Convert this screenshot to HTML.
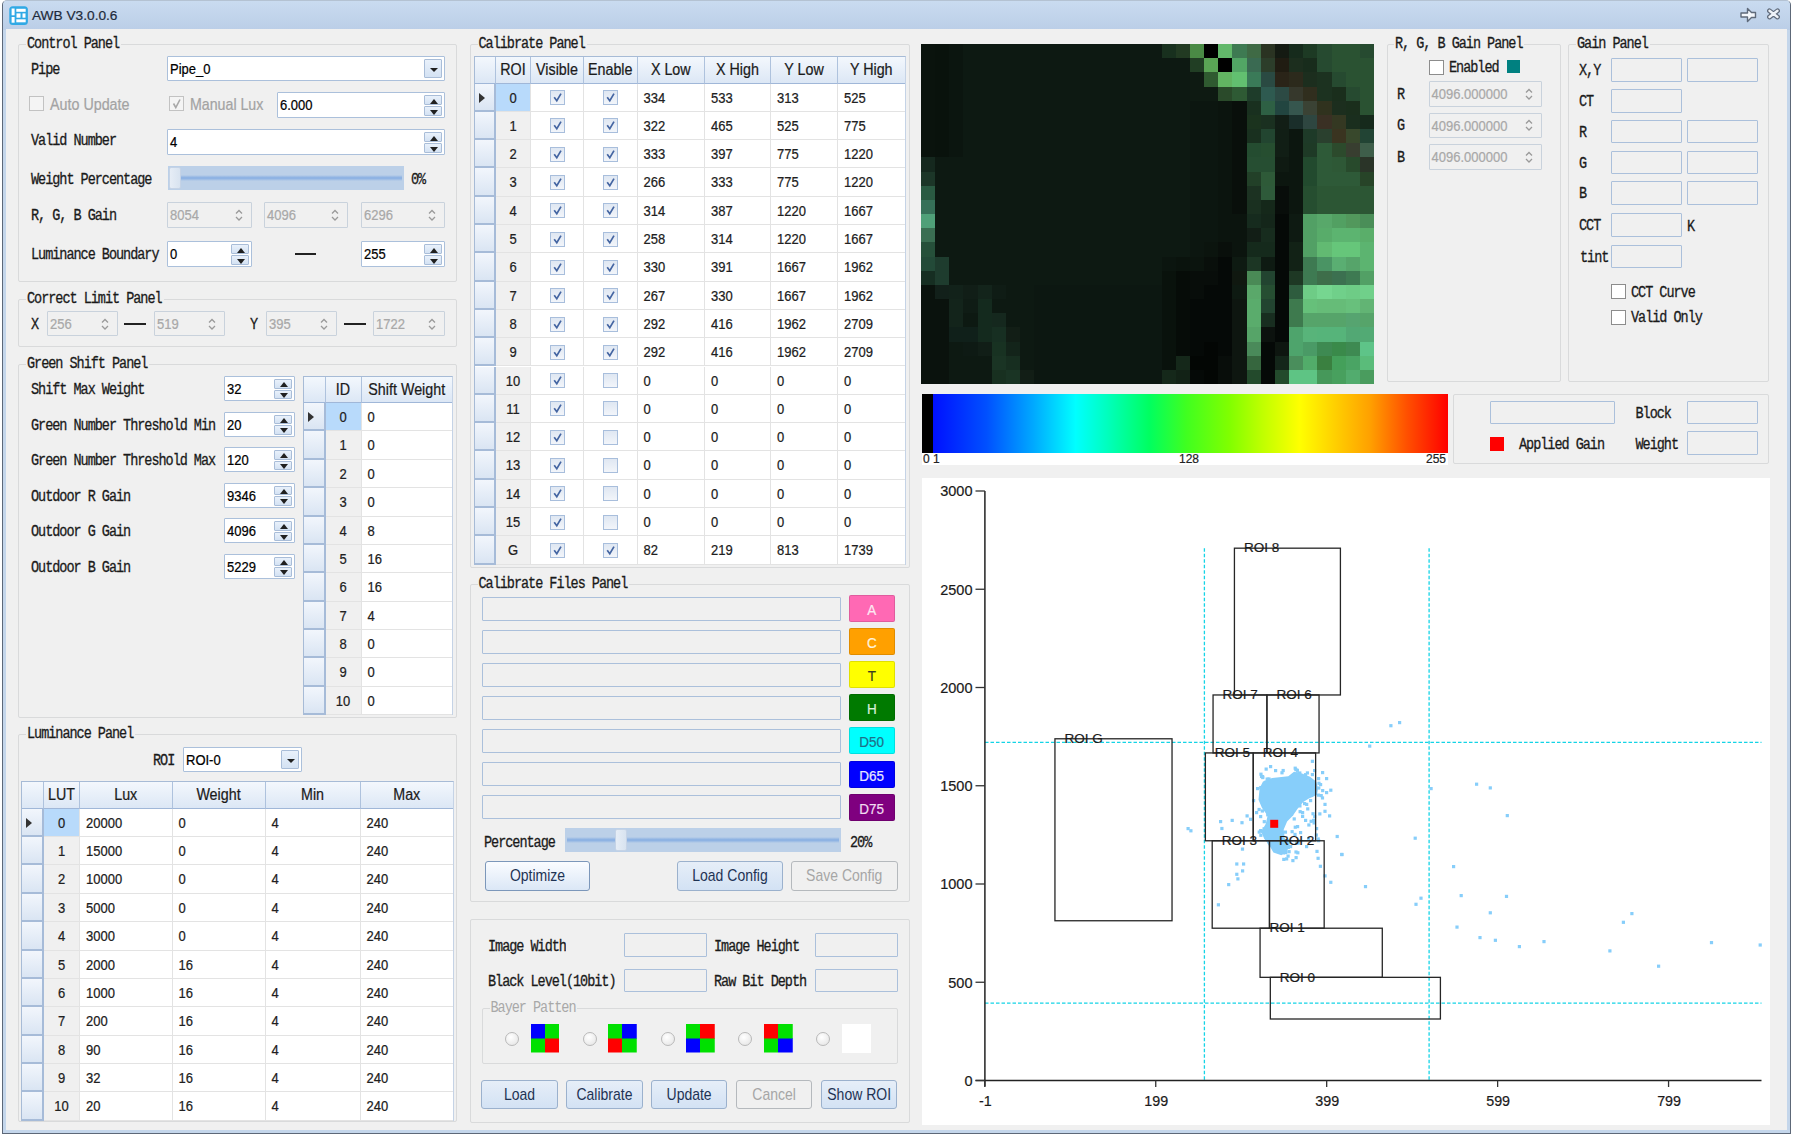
<!DOCTYPE html><html><head><meta charset="utf-8"><title>AWB V3.0.0.6</title><style>
*{box-sizing:border-box}
html,body{margin:0;padding:0;background:#fff;overflow:hidden}
#w{position:absolute;left:0;top:0;width:1794px;height:1134px;overflow:hidden;font-family:"Liberation Sans",sans-serif;font-size:13px;color:#000;-webkit-text-stroke:0.2px currentColor}
#w div{position:absolute}
#w svg{position:absolute}
.frame{left:2px;top:0px;width:1789px;height:1134px;border:1px solid #5d6878;border-top-color:#b4c2d2;border-radius:5px 5px 0 0;background:#c4d6eb}
.title{left:3px;top:1px;width:1787px;height:28.5px;border-radius:4px 4px 0 0;background:linear-gradient(#c9dbf0,#bbcee7)}
.client{left:5.6px;top:29.3px;width:1781.5px;height:1100.7px;background:#f0f0f0}
.lb{font-family:"Liberation Mono",monospace;font-size:13.5px;letter-spacing:-1.02px;font-weight:normal;-webkit-text-stroke:0.25px #1a1a1a;line-height:14px;white-space:pre;color:#1a1a1a;transform:scaleY(1.16);transform-origin:0 3px;margin-top:1px}
.lb.dis{color:#a8a8a8;-webkit-text-stroke:0}
.grp{border:1px solid #d9dadb;border-radius:2px}
.gt{background:#f0f0f0;padding:0 2px 0 1px}
.tb{background:#f0f0f0;border:1px solid #abc0db;border-radius:1px}
.spin{background:#fff;border:1px solid #abc0db;border-radius:1px;white-space:pre}
.spin span,.tb span{position:absolute;left:2px;top:0;transform:scaleY(1.15)}
.t{display:inline-block;transform:scaleY(1.15)}
.spin.dis{background:#f0f0f0;border-color:#c9d2dc;color:#a8a8a8}
.sb{right:2px;width:18px;background:linear-gradient(#e9f1fb,#d4e2f3);border:1px solid #a9bdd8;border-radius:1px}
.chk{background:#fff;border:1px solid #8c8c8c}
.chk.dis{background:#f4f4f4;border-color:#c2c2c2}
.sld{background:#bcd0e8}
.sldtr{left:2px;height:6px;background:linear-gradient(#bcd0e8,#8fb3e3 40%,#8fb3e3 60%,#bcd0e8)}
.sldth{top:1px;width:12px;height:calc(100% - 2px);background:linear-gradient(90deg,#e6edf6,#d8e3f0);border:1px solid #c5d3e6;border-radius:2px}
.btn{-webkit-text-stroke:0;border:1px solid #9bb1cd;border-radius:3px;background:linear-gradient(#e6eef8,#d3e2f4);text-align:center;color:#1e3354;white-space:pre;font-size:14px}
.btn.dis{background:#f0f0f0;border-color:#b5b9bd;color:#a6a6a6}
.dg{background:#fff}
.hd{font-size:14.3px;background:linear-gradient(#f4f8fd,#dce7f5);border-right:1px solid #aec2dd;border-bottom:1px solid #a0b7d8;text-align:center;line-height:27px;color:#1b1b1b;white-space:pre}
.rh{background:linear-gradient(#f2f6fc,#dae5f3);border-right:2px solid #a6bbd8;border-bottom:2px solid #a6bbd8}
.cell{border-right:1px solid #e3e3e3;border-bottom:1px solid #e3e3e3;padding-left:6px;white-space:pre;color:#202020}
.idc{background:#f0f0f0;text-align:center;padding-left:0}
.sel{background:#b8dafb}
.dsq{width:3px;height:3px;background:#87cefa}
.gck{width:15px;height:15px;border:1px solid #a8bedc;background:linear-gradient(#dfe7f2,#f2f5fa)}
.cbtn{border:1px solid rgba(0,0,0,0.12);border-radius:2px;text-align:center;font-size:13.5px}
.btn.def{border-color:#7c97ba;background:linear-gradient(#fafcff,#dbe7f6)}
.radio{width:14px;height:14px;border-radius:50%;border:1px solid #b9b9b9;background:radial-gradient(circle at 40% 35%,#ffffff,#e2e2e2)}
.lbs{font-family:"Liberation Sans",sans-serif;white-space:pre}
</style></head><body><div id="w">
<div class="frame"></div><div class="title"></div><div class="client"></div>
<svg style="left:9px;top:6px" width="20" height="20"><rect x="0.3" y="0.3" width="18.6" height="18.6" rx="3.5" fill="#30a9e5"/><rect x="2.6" y="2.5" width="3" height="6.8" fill="#fff"/><rect x="2.6" y="11" width="3" height="5.7" fill="#fff"/><rect x="7.3" y="2.8" width="9.4" height="3" fill="#fff"/><rect x="7.5" y="7.4" width="4" height="4.3" fill="#fff"/><rect x="13.5" y="7.4" width="3" height="4.3" fill="#fff"/><rect x="7.3" y="13.3" width="9.4" height="3" fill="#fff"/></svg>
<div class="lbs" style="left:32px;top:7px;font-size:13.7px;color:#1e2a3a;line-height:17px">AWB V3.0.0.6</div>
<svg style="left:1739px;top:6px" width="20" height="18"><path d="M2 7 H8.5 V2.5 L12.5 6.5 H16.5 V11.5 H12.5 L8.5 15.5 V11 H2 Z" fill="#f4f7fb" stroke="#5f6a7a" stroke-width="1.4" stroke-linejoin="round"/></svg>
<svg style="left:1765px;top:6px" width="18" height="16"><path d="M4.5 4.8 L12.5 11 M12.5 4.8 L4.5 11" stroke="#5f6a7a" stroke-width="4.8" stroke-linecap="round"/><path d="M4.5 4.8 L12.5 11 M12.5 4.8 L4.5 11" stroke="#eef2f8" stroke-width="2.4" stroke-linecap="round"/></svg>
<div class="grp" style="left:18px;top:44px;width:439px;height:238px"></div>
<div class="lb gt" style="left:26px;top:36px">Control Panel</div>
<div class="lb" style="left:31px;top:62px;">Pipe</div>
<div class="spin" style="left:167px;top:56px;width:278px;height:25px;line-height:23px"><span>Pipe_0</span><div class="sb" style="top:2px;height:19px"><svg width="8" height="5" style="position:absolute;left:5px;top:7.5px"><path d="M0 0 L4 4 L8 0Z" fill="#202020"/></svg></div></div>
<div class="chk dis" style="left:29px;top:96px;width:15px;height:15px"></div>
<div class="lbs" style="left:50px;top:96px;color:#a3a3a3;line-height:16px;font-size:14.3px"><span class="t">Auto Update</span></div>
<div class="chk dis" style="left:169px;top:96px;width:15px;height:15px"><svg width="15" height="15" style="position:absolute;left:-1px;top:-1px"><path d="M4.5 7.5 L6.8 11.5 L11 3.5" fill="none" stroke="#a8a8a8" stroke-width="1.6"/></svg></div>
<div class="lbs" style="left:190px;top:96px;color:#a3a3a3;line-height:16px;font-size:14.2px"><span class="t">Manual Lux</span></div>
<div class="spin" style="left:277px;top:92px;width:168px;height:26px;line-height:24px"><span>6.000</span><div class="sb" style="top:2px;height:10.0px"><svg width="8" height="5" style="position:absolute;left:5px;top:2.5px"><path d="M0 5 L4 0 L8 5Z" fill="#202020"/></svg></div><div class="sb" style="top:13.0px;height:10.0px"><svg width="8" height="5" style="position:absolute;left:5px;top:2.5px"><path d="M0 0 L4 5 L8 0Z" fill="#202020"/></svg></div></div>
<div class="lb" style="left:31px;top:133px;">Valid Number</div>
<div class="spin" style="left:167px;top:129px;width:278px;height:26px;line-height:24px"><span>4</span><div class="sb" style="top:2px;height:10.0px"><svg width="8" height="5" style="position:absolute;left:5px;top:2.5px"><path d="M0 5 L4 0 L8 5Z" fill="#202020"/></svg></div><div class="sb" style="top:13.0px;height:10.0px"><svg width="8" height="5" style="position:absolute;left:5px;top:2.5px"><path d="M0 0 L4 5 L8 0Z" fill="#202020"/></svg></div></div>
<div class="lb" style="left:31px;top:172px;">Weight Percentage</div>
<div class="sld" style="left:168px;top:166px;width:236px;height:24px"><div class="sldtr" style="top:9.0px;width:232px"></div><div class="sldth" style="left:1px"></div></div>
<div class="lb" style="left:411px;top:172px;">0%</div>
<div class="lb" style="left:31px;top:208px;">R, G, B Gain</div>
<div class="spin dis" style="left:167px;top:202px;width:85px;height:26px;line-height:24px"><span>8054</span><svg class="chev" width="10" height="16" style="right:7px;top:4.0px"><path d="M2 6.5 L5 3.5 L8 6.5" fill="none" stroke="#9a9a9a" stroke-width="1.3"/><path d="M2 10 L5 13 L8 10" fill="none" stroke="#9a9a9a" stroke-width="1.3"/></svg></div>
<div class="spin dis" style="left:264px;top:202px;width:84px;height:26px;line-height:24px"><span>4096</span><svg class="chev" width="10" height="16" style="right:7px;top:4.0px"><path d="M2 6.5 L5 3.5 L8 6.5" fill="none" stroke="#9a9a9a" stroke-width="1.3"/><path d="M2 10 L5 13 L8 10" fill="none" stroke="#9a9a9a" stroke-width="1.3"/></svg></div>
<div class="spin dis" style="left:361px;top:202px;width:84px;height:26px;line-height:24px"><span>6296</span><svg class="chev" width="10" height="16" style="right:7px;top:4.0px"><path d="M2 6.5 L5 3.5 L8 6.5" fill="none" stroke="#9a9a9a" stroke-width="1.3"/><path d="M2 10 L5 13 L8 10" fill="none" stroke="#9a9a9a" stroke-width="1.3"/></svg></div>
<div class="lb" style="left:31px;top:247px;">Luminance Boundary</div>
<div class="spin" style="left:167px;top:241px;width:85px;height:26px;line-height:24px"><span>0</span><div class="sb" style="top:2px;height:10.0px"><svg width="8" height="5" style="position:absolute;left:5px;top:2.5px"><path d="M0 5 L4 0 L8 5Z" fill="#202020"/></svg></div><div class="sb" style="top:13.0px;height:10.0px"><svg width="8" height="5" style="position:absolute;left:5px;top:2.5px"><path d="M0 0 L4 5 L8 0Z" fill="#202020"/></svg></div></div>
<div style="left:295px;top:253px;width:21px;height:2px;background:#222"></div>
<div class="spin" style="left:361px;top:241px;width:84px;height:26px;line-height:24px"><span>255</span><div class="sb" style="top:2px;height:10.0px"><svg width="8" height="5" style="position:absolute;left:5px;top:2.5px"><path d="M0 5 L4 0 L8 5Z" fill="#202020"/></svg></div><div class="sb" style="top:13.0px;height:10.0px"><svg width="8" height="5" style="position:absolute;left:5px;top:2.5px"><path d="M0 0 L4 5 L8 0Z" fill="#202020"/></svg></div></div>
<div class="grp" style="left:18px;top:299px;width:439px;height:48px"></div>
<div class="lb gt" style="left:26px;top:291px">Correct Limit Panel</div>
<div class="lb" style="left:31px;top:317px;">X</div>
<div class="spin dis" style="left:47px;top:311px;width:71px;height:25px;line-height:23px"><span>256</span><svg class="chev" width="10" height="16" style="right:7px;top:3.5px"><path d="M2 6.5 L5 3.5 L8 6.5" fill="none" stroke="#9a9a9a" stroke-width="1.3"/><path d="M2 10 L5 13 L8 10" fill="none" stroke="#9a9a9a" stroke-width="1.3"/></svg></div>
<div style="left:124px;top:323px;width:22px;height:2px;background:#222"></div>
<div class="spin dis" style="left:154px;top:311px;width:71px;height:25px;line-height:23px"><span>519</span><svg class="chev" width="10" height="16" style="right:7px;top:3.5px"><path d="M2 6.5 L5 3.5 L8 6.5" fill="none" stroke="#9a9a9a" stroke-width="1.3"/><path d="M2 10 L5 13 L8 10" fill="none" stroke="#9a9a9a" stroke-width="1.3"/></svg></div>
<div class="lb" style="left:250px;top:317px;">Y</div>
<div class="spin dis" style="left:266px;top:311px;width:71px;height:25px;line-height:23px"><span>395</span><svg class="chev" width="10" height="16" style="right:7px;top:3.5px"><path d="M2 6.5 L5 3.5 L8 6.5" fill="none" stroke="#9a9a9a" stroke-width="1.3"/><path d="M2 10 L5 13 L8 10" fill="none" stroke="#9a9a9a" stroke-width="1.3"/></svg></div>
<div style="left:344px;top:323px;width:22px;height:2px;background:#222"></div>
<div class="spin dis" style="left:373px;top:311px;width:72px;height:25px;line-height:23px"><span>1722</span><svg class="chev" width="10" height="16" style="right:7px;top:3.5px"><path d="M2 6.5 L5 3.5 L8 6.5" fill="none" stroke="#9a9a9a" stroke-width="1.3"/><path d="M2 10 L5 13 L8 10" fill="none" stroke="#9a9a9a" stroke-width="1.3"/></svg></div>
<div class="grp" style="left:18px;top:364px;width:439px;height:354px"></div>
<div class="lb gt" style="left:26px;top:356px">Green Shift Panel</div>
<div class="lb" style="left:31px;top:382.0px;">Shift Max Weight</div>
<div class="spin" style="left:224px;top:376.0px;width:71px;height:25px;line-height:23px"><span>32</span><div class="sb" style="top:2px;height:9.5px"><svg width="8" height="5" style="position:absolute;left:5px;top:2.25px"><path d="M0 5 L4 0 L8 5Z" fill="#202020"/></svg></div><div class="sb" style="top:12.5px;height:9.5px"><svg width="8" height="5" style="position:absolute;left:5px;top:2.25px"><path d="M0 0 L4 5 L8 0Z" fill="#202020"/></svg></div></div>
<div class="lb" style="left:31px;top:417.5px;">Green Number Threshold Min</div>
<div class="spin" style="left:224px;top:411.5px;width:71px;height:25px;line-height:23px"><span>20</span><div class="sb" style="top:2px;height:9.5px"><svg width="8" height="5" style="position:absolute;left:5px;top:2.25px"><path d="M0 5 L4 0 L8 5Z" fill="#202020"/></svg></div><div class="sb" style="top:12.5px;height:9.5px"><svg width="8" height="5" style="position:absolute;left:5px;top:2.25px"><path d="M0 0 L4 5 L8 0Z" fill="#202020"/></svg></div></div>
<div class="lb" style="left:31px;top:453.0px;">Green Number Threshold Max</div>
<div class="spin" style="left:224px;top:447.0px;width:71px;height:25px;line-height:23px"><span>120</span><div class="sb" style="top:2px;height:9.5px"><svg width="8" height="5" style="position:absolute;left:5px;top:2.25px"><path d="M0 5 L4 0 L8 5Z" fill="#202020"/></svg></div><div class="sb" style="top:12.5px;height:9.5px"><svg width="8" height="5" style="position:absolute;left:5px;top:2.25px"><path d="M0 0 L4 5 L8 0Z" fill="#202020"/></svg></div></div>
<div class="lb" style="left:31px;top:488.5px;">Outdoor R Gain</div>
<div class="spin" style="left:224px;top:482.5px;width:71px;height:25px;line-height:23px"><span>9346</span><div class="sb" style="top:2px;height:9.5px"><svg width="8" height="5" style="position:absolute;left:5px;top:2.25px"><path d="M0 5 L4 0 L8 5Z" fill="#202020"/></svg></div><div class="sb" style="top:12.5px;height:9.5px"><svg width="8" height="5" style="position:absolute;left:5px;top:2.25px"><path d="M0 0 L4 5 L8 0Z" fill="#202020"/></svg></div></div>
<div class="lb" style="left:31px;top:524.0px;">Outdoor G Gain</div>
<div class="spin" style="left:224px;top:518.0px;width:71px;height:25px;line-height:23px"><span>4096</span><div class="sb" style="top:2px;height:9.5px"><svg width="8" height="5" style="position:absolute;left:5px;top:2.25px"><path d="M0 5 L4 0 L8 5Z" fill="#202020"/></svg></div><div class="sb" style="top:12.5px;height:9.5px"><svg width="8" height="5" style="position:absolute;left:5px;top:2.25px"><path d="M0 0 L4 5 L8 0Z" fill="#202020"/></svg></div></div>
<div class="lb" style="left:31px;top:559.5px;">Outdoor B Gain</div>
<div class="spin" style="left:224px;top:553.5px;width:71px;height:25px;line-height:23px"><span>5229</span><div class="sb" style="top:2px;height:9.5px"><svg width="8" height="5" style="position:absolute;left:5px;top:2.25px"><path d="M0 5 L4 0 L8 5Z" fill="#202020"/></svg></div><div class="sb" style="top:12.5px;height:9.5px"><svg width="8" height="5" style="position:absolute;left:5px;top:2.25px"><path d="M0 0 L4 5 L8 0Z" fill="#202020"/></svg></div></div>
<div class="dg" style="left:303px;top:375.6px;width:150px;height:339.58px"></div>
<div class="hd" style="left:303px;top:375.6px;width:22.5px;height:27.4px"><span class="t"></span></div>
<div class="hd" style="left:325.5px;top:375.6px;width:36.0px;height:27.4px"><span class="t">ID</span></div>
<div class="hd" style="left:361.5px;top:375.6px;width:91.5px;height:27.4px"><span class="t">Shift Weight</span></div>
<div class="rh" style="left:303px;top:403.0px;width:22.5px;height:28.38px"><svg width="6" height="10" style="left:5px;top:9.19px"><path d="M0 0 L6 5 L0 10Z" fill="#333"/></svg></div>
<div class="cell idc sel" style="left:325.5px;top:403.0px;width:36.0px;height:28.38px;line-height:28.38px"><span class="t">0</span></div>
<div class="cell" style="left:361.5px;top:403.0px;width:91.5px;height:28.38px;line-height:28.38px"><span class="t">0</span></div>
<div class="rh" style="left:303px;top:431.38px;width:22.5px;height:28.38px"></div>
<div class="cell idc" style="left:325.5px;top:431.38px;width:36.0px;height:28.38px;line-height:28.38px"><span class="t">1</span></div>
<div class="cell" style="left:361.5px;top:431.38px;width:91.5px;height:28.38px;line-height:28.38px"><span class="t">0</span></div>
<div class="rh" style="left:303px;top:459.76px;width:22.5px;height:28.38px"></div>
<div class="cell idc" style="left:325.5px;top:459.76px;width:36.0px;height:28.38px;line-height:28.38px"><span class="t">2</span></div>
<div class="cell" style="left:361.5px;top:459.76px;width:91.5px;height:28.38px;line-height:28.38px"><span class="t">0</span></div>
<div class="rh" style="left:303px;top:488.14px;width:22.5px;height:28.38px"></div>
<div class="cell idc" style="left:325.5px;top:488.14px;width:36.0px;height:28.38px;line-height:28.38px"><span class="t">3</span></div>
<div class="cell" style="left:361.5px;top:488.14px;width:91.5px;height:28.38px;line-height:28.38px"><span class="t">0</span></div>
<div class="rh" style="left:303px;top:516.52px;width:22.5px;height:28.38px"></div>
<div class="cell idc" style="left:325.5px;top:516.52px;width:36.0px;height:28.38px;line-height:28.38px"><span class="t">4</span></div>
<div class="cell" style="left:361.5px;top:516.52px;width:91.5px;height:28.38px;line-height:28.38px"><span class="t">8</span></div>
<div class="rh" style="left:303px;top:544.9px;width:22.5px;height:28.38px"></div>
<div class="cell idc" style="left:325.5px;top:544.9px;width:36.0px;height:28.38px;line-height:28.38px"><span class="t">5</span></div>
<div class="cell" style="left:361.5px;top:544.9px;width:91.5px;height:28.38px;line-height:28.38px"><span class="t">16</span></div>
<div class="rh" style="left:303px;top:573.28px;width:22.5px;height:28.38px"></div>
<div class="cell idc" style="left:325.5px;top:573.28px;width:36.0px;height:28.38px;line-height:28.38px"><span class="t">6</span></div>
<div class="cell" style="left:361.5px;top:573.28px;width:91.5px;height:28.38px;line-height:28.38px"><span class="t">16</span></div>
<div class="rh" style="left:303px;top:601.66px;width:22.5px;height:28.38px"></div>
<div class="cell idc" style="left:325.5px;top:601.66px;width:36.0px;height:28.38px;line-height:28.38px"><span class="t">7</span></div>
<div class="cell" style="left:361.5px;top:601.66px;width:91.5px;height:28.38px;line-height:28.38px"><span class="t">4</span></div>
<div class="rh" style="left:303px;top:630.04px;width:22.5px;height:28.38px"></div>
<div class="cell idc" style="left:325.5px;top:630.04px;width:36.0px;height:28.38px;line-height:28.38px"><span class="t">8</span></div>
<div class="cell" style="left:361.5px;top:630.04px;width:91.5px;height:28.38px;line-height:28.38px"><span class="t">0</span></div>
<div class="rh" style="left:303px;top:658.42px;width:22.5px;height:28.38px"></div>
<div class="cell idc" style="left:325.5px;top:658.42px;width:36.0px;height:28.38px;line-height:28.38px"><span class="t">9</span></div>
<div class="cell" style="left:361.5px;top:658.42px;width:91.5px;height:28.38px;line-height:28.38px"><span class="t">0</span></div>
<div class="rh" style="left:303px;top:686.8px;width:22.5px;height:28.38px"></div>
<div class="cell idc" style="left:325.5px;top:686.8px;width:36.0px;height:28.38px;line-height:28.38px"><span class="t">10</span></div>
<div class="cell" style="left:361.5px;top:686.8px;width:91.5px;height:28.38px;line-height:28.38px"><span class="t">0</span></div>
<div style="left:303px;top:375.6px;width:150px;height:339.58px;border:1px solid #a7bbd6;border-bottom:none;border-right-color:#c5d3e6"></div>
<div class="grp" style="left:18px;top:734px;width:439px;height:388px"></div>
<div class="lb gt" style="left:26px;top:726px">Luminance Panel</div>
<div class="lb" style="left:153px;top:753px;">ROI</div>
<div class="spin" style="left:183px;top:747px;width:119px;height:25px;line-height:23px"><span>ROI-0</span><div class="sb" style="top:2px;height:19px"><svg width="8" height="5" style="position:absolute;left:5px;top:7.5px"><path d="M0 0 L4 4 L8 0Z" fill="#202020"/></svg></div></div>
<div class="dg" style="left:21px;top:781px;width:433px;height:339.77px"></div>
<div class="hd" style="left:21px;top:781px;width:23px;height:27.7px"><span class="t"></span></div>
<div class="hd" style="left:44px;top:781px;width:36px;height:27.7px"><span class="t">LUT</span></div>
<div class="hd" style="left:80px;top:781px;width:92.5px;height:27.7px"><span class="t">Lux</span></div>
<div class="hd" style="left:172.5px;top:781px;width:93.0px;height:27.7px"><span class="t">Weight</span></div>
<div class="hd" style="left:265.5px;top:781px;width:95.0px;height:27.7px"><span class="t">Min</span></div>
<div class="hd" style="left:360.5px;top:781px;width:93.5px;height:27.7px"><span class="t">Max</span></div>
<div class="rh" style="left:21px;top:808.7px;width:23px;height:28.37px"><svg width="6" height="10" style="left:5px;top:9.185px"><path d="M0 0 L6 5 L0 10Z" fill="#333"/></svg></div>
<div class="cell idc sel" style="left:44px;top:808.7px;width:36px;height:28.37px;line-height:28.37px"><span class="t">0</span></div>
<div class="cell" style="left:80px;top:808.7px;width:92.5px;height:28.37px;line-height:28.37px"><span class="t">20000</span></div>
<div class="cell" style="left:172.5px;top:808.7px;width:93.0px;height:28.37px;line-height:28.37px"><span class="t">0</span></div>
<div class="cell" style="left:265.5px;top:808.7px;width:95.0px;height:28.37px;line-height:28.37px"><span class="t">4</span></div>
<div class="cell" style="left:360.5px;top:808.7px;width:93.5px;height:28.37px;line-height:28.37px"><span class="t">240</span></div>
<div class="rh" style="left:21px;top:837.07px;width:23px;height:28.37px"></div>
<div class="cell idc" style="left:44px;top:837.07px;width:36px;height:28.37px;line-height:28.37px"><span class="t">1</span></div>
<div class="cell" style="left:80px;top:837.07px;width:92.5px;height:28.37px;line-height:28.37px"><span class="t">15000</span></div>
<div class="cell" style="left:172.5px;top:837.07px;width:93.0px;height:28.37px;line-height:28.37px"><span class="t">0</span></div>
<div class="cell" style="left:265.5px;top:837.07px;width:95.0px;height:28.37px;line-height:28.37px"><span class="t">4</span></div>
<div class="cell" style="left:360.5px;top:837.07px;width:93.5px;height:28.37px;line-height:28.37px"><span class="t">240</span></div>
<div class="rh" style="left:21px;top:865.44px;width:23px;height:28.37px"></div>
<div class="cell idc" style="left:44px;top:865.44px;width:36px;height:28.37px;line-height:28.37px"><span class="t">2</span></div>
<div class="cell" style="left:80px;top:865.44px;width:92.5px;height:28.37px;line-height:28.37px"><span class="t">10000</span></div>
<div class="cell" style="left:172.5px;top:865.44px;width:93.0px;height:28.37px;line-height:28.37px"><span class="t">0</span></div>
<div class="cell" style="left:265.5px;top:865.44px;width:95.0px;height:28.37px;line-height:28.37px"><span class="t">4</span></div>
<div class="cell" style="left:360.5px;top:865.44px;width:93.5px;height:28.37px;line-height:28.37px"><span class="t">240</span></div>
<div class="rh" style="left:21px;top:893.8100000000001px;width:23px;height:28.37px"></div>
<div class="cell idc" style="left:44px;top:893.8100000000001px;width:36px;height:28.37px;line-height:28.37px"><span class="t">3</span></div>
<div class="cell" style="left:80px;top:893.8100000000001px;width:92.5px;height:28.37px;line-height:28.37px"><span class="t">5000</span></div>
<div class="cell" style="left:172.5px;top:893.8100000000001px;width:93.0px;height:28.37px;line-height:28.37px"><span class="t">0</span></div>
<div class="cell" style="left:265.5px;top:893.8100000000001px;width:95.0px;height:28.37px;line-height:28.37px"><span class="t">4</span></div>
<div class="cell" style="left:360.5px;top:893.8100000000001px;width:93.5px;height:28.37px;line-height:28.37px"><span class="t">240</span></div>
<div class="rh" style="left:21px;top:922.1800000000001px;width:23px;height:28.37px"></div>
<div class="cell idc" style="left:44px;top:922.1800000000001px;width:36px;height:28.37px;line-height:28.37px"><span class="t">4</span></div>
<div class="cell" style="left:80px;top:922.1800000000001px;width:92.5px;height:28.37px;line-height:28.37px"><span class="t">3000</span></div>
<div class="cell" style="left:172.5px;top:922.1800000000001px;width:93.0px;height:28.37px;line-height:28.37px"><span class="t">0</span></div>
<div class="cell" style="left:265.5px;top:922.1800000000001px;width:95.0px;height:28.37px;line-height:28.37px"><span class="t">4</span></div>
<div class="cell" style="left:360.5px;top:922.1800000000001px;width:93.5px;height:28.37px;line-height:28.37px"><span class="t">240</span></div>
<div class="rh" style="left:21px;top:950.5500000000001px;width:23px;height:28.37px"></div>
<div class="cell idc" style="left:44px;top:950.5500000000001px;width:36px;height:28.37px;line-height:28.37px"><span class="t">5</span></div>
<div class="cell" style="left:80px;top:950.5500000000001px;width:92.5px;height:28.37px;line-height:28.37px"><span class="t">2000</span></div>
<div class="cell" style="left:172.5px;top:950.5500000000001px;width:93.0px;height:28.37px;line-height:28.37px"><span class="t">16</span></div>
<div class="cell" style="left:265.5px;top:950.5500000000001px;width:95.0px;height:28.37px;line-height:28.37px"><span class="t">4</span></div>
<div class="cell" style="left:360.5px;top:950.5500000000001px;width:93.5px;height:28.37px;line-height:28.37px"><span class="t">240</span></div>
<div class="rh" style="left:21px;top:978.9200000000001px;width:23px;height:28.37px"></div>
<div class="cell idc" style="left:44px;top:978.9200000000001px;width:36px;height:28.37px;line-height:28.37px"><span class="t">6</span></div>
<div class="cell" style="left:80px;top:978.9200000000001px;width:92.5px;height:28.37px;line-height:28.37px"><span class="t">1000</span></div>
<div class="cell" style="left:172.5px;top:978.9200000000001px;width:93.0px;height:28.37px;line-height:28.37px"><span class="t">16</span></div>
<div class="cell" style="left:265.5px;top:978.9200000000001px;width:95.0px;height:28.37px;line-height:28.37px"><span class="t">4</span></div>
<div class="cell" style="left:360.5px;top:978.9200000000001px;width:93.5px;height:28.37px;line-height:28.37px"><span class="t">240</span></div>
<div class="rh" style="left:21px;top:1007.2900000000001px;width:23px;height:28.37px"></div>
<div class="cell idc" style="left:44px;top:1007.2900000000001px;width:36px;height:28.37px;line-height:28.37px"><span class="t">7</span></div>
<div class="cell" style="left:80px;top:1007.2900000000001px;width:92.5px;height:28.37px;line-height:28.37px"><span class="t">200</span></div>
<div class="cell" style="left:172.5px;top:1007.2900000000001px;width:93.0px;height:28.37px;line-height:28.37px"><span class="t">16</span></div>
<div class="cell" style="left:265.5px;top:1007.2900000000001px;width:95.0px;height:28.37px;line-height:28.37px"><span class="t">4</span></div>
<div class="cell" style="left:360.5px;top:1007.2900000000001px;width:93.5px;height:28.37px;line-height:28.37px"><span class="t">240</span></div>
<div class="rh" style="left:21px;top:1035.66px;width:23px;height:28.37px"></div>
<div class="cell idc" style="left:44px;top:1035.66px;width:36px;height:28.37px;line-height:28.37px"><span class="t">8</span></div>
<div class="cell" style="left:80px;top:1035.66px;width:92.5px;height:28.37px;line-height:28.37px"><span class="t">90</span></div>
<div class="cell" style="left:172.5px;top:1035.66px;width:93.0px;height:28.37px;line-height:28.37px"><span class="t">16</span></div>
<div class="cell" style="left:265.5px;top:1035.66px;width:95.0px;height:28.37px;line-height:28.37px"><span class="t">4</span></div>
<div class="cell" style="left:360.5px;top:1035.66px;width:93.5px;height:28.37px;line-height:28.37px"><span class="t">240</span></div>
<div class="rh" style="left:21px;top:1064.03px;width:23px;height:28.37px"></div>
<div class="cell idc" style="left:44px;top:1064.03px;width:36px;height:28.37px;line-height:28.37px"><span class="t">9</span></div>
<div class="cell" style="left:80px;top:1064.03px;width:92.5px;height:28.37px;line-height:28.37px"><span class="t">32</span></div>
<div class="cell" style="left:172.5px;top:1064.03px;width:93.0px;height:28.37px;line-height:28.37px"><span class="t">16</span></div>
<div class="cell" style="left:265.5px;top:1064.03px;width:95.0px;height:28.37px;line-height:28.37px"><span class="t">4</span></div>
<div class="cell" style="left:360.5px;top:1064.03px;width:93.5px;height:28.37px;line-height:28.37px"><span class="t">240</span></div>
<div class="rh" style="left:21px;top:1092.4px;width:23px;height:28.37px"></div>
<div class="cell idc" style="left:44px;top:1092.4px;width:36px;height:28.37px;line-height:28.37px"><span class="t">10</span></div>
<div class="cell" style="left:80px;top:1092.4px;width:92.5px;height:28.37px;line-height:28.37px"><span class="t">20</span></div>
<div class="cell" style="left:172.5px;top:1092.4px;width:93.0px;height:28.37px;line-height:28.37px"><span class="t">16</span></div>
<div class="cell" style="left:265.5px;top:1092.4px;width:95.0px;height:28.37px;line-height:28.37px"><span class="t">4</span></div>
<div class="cell" style="left:360.5px;top:1092.4px;width:93.5px;height:28.37px;line-height:28.37px"><span class="t">240</span></div>
<div style="left:21px;top:781px;width:433px;height:339.77px;border:1px solid #a7bbd6;border-bottom:none;border-right-color:#c5d3e6"></div>
<div class="grp" style="left:469.5px;top:44px;width:440px;height:523.5px"></div>
<div class="lb gt" style="left:477.5px;top:36px">Calibrate Panel</div>
<div class="dg" style="left:473.5px;top:56px;width:432.0px;height:508.6px"></div>
<div class="hd" style="left:473.5px;top:56px;width:22.5px;height:27.5px"><span class="t"></span></div>
<div class="hd" style="left:496px;top:56px;width:35px;height:27.5px"><span class="t">ROI</span></div>
<div class="hd" style="left:531px;top:56px;width:53px;height:27.5px"><span class="t">Visible</span></div>
<div class="hd" style="left:584px;top:56px;width:53.5px;height:27.5px"><span class="t">Enable</span></div>
<div class="hd" style="left:637.5px;top:56px;width:67.5px;height:27.5px"><span class="t">X Low</span></div>
<div class="hd" style="left:705px;top:56px;width:66px;height:27.5px"><span class="t">X High</span></div>
<div class="hd" style="left:771px;top:56px;width:67px;height:27.5px"><span class="t">Y Low</span></div>
<div class="hd" style="left:838px;top:56px;width:67.5px;height:27.5px"><span class="t">Y High</span></div>
<div class="rh" style="left:473.5px;top:83.5px;width:22.5px;height:28.3px"><svg width="6" height="10" style="left:5px;top:9.15px"><path d="M0 0 L6 5 L0 10Z" fill="#333"/></svg></div>
<div class="cell idc sel" style="left:496px;top:83.5px;width:35px;height:28.3px;line-height:28.3px"><span class="t">0</span></div>
<div class="cell" style="left:531px;top:83.5px;width:53px;height:28.3px"></div>
<div class="gck" style="left:550.0px;top:90.15px"><svg width="15" height="15" style="left:-1px;top:-1px"><path d="M4.2 7.2 L6.8 10.8 L11 3.6" fill="none" stroke="#4465a2" stroke-width="1.7"/></svg></div>
<div class="cell" style="left:584px;top:83.5px;width:53.5px;height:28.3px"></div>
<div class="gck" style="left:603.25px;top:90.15px"><svg width="15" height="15" style="left:-1px;top:-1px"><path d="M4.2 7.2 L6.8 10.8 L11 3.6" fill="none" stroke="#4465a2" stroke-width="1.7"/></svg></div>
<div class="cell" style="left:637.5px;top:83.5px;width:67.5px;height:28.3px;line-height:28.3px"><span class="t">334</span></div>
<div class="cell" style="left:705px;top:83.5px;width:66px;height:28.3px;line-height:28.3px"><span class="t">533</span></div>
<div class="cell" style="left:771px;top:83.5px;width:67px;height:28.3px;line-height:28.3px"><span class="t">313</span></div>
<div class="cell" style="left:838px;top:83.5px;width:67.5px;height:28.3px;line-height:28.3px"><span class="t">525</span></div>
<div class="rh" style="left:473.5px;top:111.8px;width:22.5px;height:28.3px"></div>
<div class="cell idc" style="left:496px;top:111.8px;width:35px;height:28.3px;line-height:28.3px"><span class="t">1</span></div>
<div class="cell" style="left:531px;top:111.8px;width:53px;height:28.3px"></div>
<div class="gck" style="left:550.0px;top:118.45px"><svg width="15" height="15" style="left:-1px;top:-1px"><path d="M4.2 7.2 L6.8 10.8 L11 3.6" fill="none" stroke="#4465a2" stroke-width="1.7"/></svg></div>
<div class="cell" style="left:584px;top:111.8px;width:53.5px;height:28.3px"></div>
<div class="gck" style="left:603.25px;top:118.45px"><svg width="15" height="15" style="left:-1px;top:-1px"><path d="M4.2 7.2 L6.8 10.8 L11 3.6" fill="none" stroke="#4465a2" stroke-width="1.7"/></svg></div>
<div class="cell" style="left:637.5px;top:111.8px;width:67.5px;height:28.3px;line-height:28.3px"><span class="t">322</span></div>
<div class="cell" style="left:705px;top:111.8px;width:66px;height:28.3px;line-height:28.3px"><span class="t">465</span></div>
<div class="cell" style="left:771px;top:111.8px;width:67px;height:28.3px;line-height:28.3px"><span class="t">525</span></div>
<div class="cell" style="left:838px;top:111.8px;width:67.5px;height:28.3px;line-height:28.3px"><span class="t">775</span></div>
<div class="rh" style="left:473.5px;top:140.1px;width:22.5px;height:28.3px"></div>
<div class="cell idc" style="left:496px;top:140.1px;width:35px;height:28.3px;line-height:28.3px"><span class="t">2</span></div>
<div class="cell" style="left:531px;top:140.1px;width:53px;height:28.3px"></div>
<div class="gck" style="left:550.0px;top:146.75px"><svg width="15" height="15" style="left:-1px;top:-1px"><path d="M4.2 7.2 L6.8 10.8 L11 3.6" fill="none" stroke="#4465a2" stroke-width="1.7"/></svg></div>
<div class="cell" style="left:584px;top:140.1px;width:53.5px;height:28.3px"></div>
<div class="gck" style="left:603.25px;top:146.75px"><svg width="15" height="15" style="left:-1px;top:-1px"><path d="M4.2 7.2 L6.8 10.8 L11 3.6" fill="none" stroke="#4465a2" stroke-width="1.7"/></svg></div>
<div class="cell" style="left:637.5px;top:140.1px;width:67.5px;height:28.3px;line-height:28.3px"><span class="t">333</span></div>
<div class="cell" style="left:705px;top:140.1px;width:66px;height:28.3px;line-height:28.3px"><span class="t">397</span></div>
<div class="cell" style="left:771px;top:140.1px;width:67px;height:28.3px;line-height:28.3px"><span class="t">775</span></div>
<div class="cell" style="left:838px;top:140.1px;width:67.5px;height:28.3px;line-height:28.3px"><span class="t">1220</span></div>
<div class="rh" style="left:473.5px;top:168.4px;width:22.5px;height:28.3px"></div>
<div class="cell idc" style="left:496px;top:168.4px;width:35px;height:28.3px;line-height:28.3px"><span class="t">3</span></div>
<div class="cell" style="left:531px;top:168.4px;width:53px;height:28.3px"></div>
<div class="gck" style="left:550.0px;top:175.05px"><svg width="15" height="15" style="left:-1px;top:-1px"><path d="M4.2 7.2 L6.8 10.8 L11 3.6" fill="none" stroke="#4465a2" stroke-width="1.7"/></svg></div>
<div class="cell" style="left:584px;top:168.4px;width:53.5px;height:28.3px"></div>
<div class="gck" style="left:603.25px;top:175.05px"><svg width="15" height="15" style="left:-1px;top:-1px"><path d="M4.2 7.2 L6.8 10.8 L11 3.6" fill="none" stroke="#4465a2" stroke-width="1.7"/></svg></div>
<div class="cell" style="left:637.5px;top:168.4px;width:67.5px;height:28.3px;line-height:28.3px"><span class="t">266</span></div>
<div class="cell" style="left:705px;top:168.4px;width:66px;height:28.3px;line-height:28.3px"><span class="t">333</span></div>
<div class="cell" style="left:771px;top:168.4px;width:67px;height:28.3px;line-height:28.3px"><span class="t">775</span></div>
<div class="cell" style="left:838px;top:168.4px;width:67.5px;height:28.3px;line-height:28.3px"><span class="t">1220</span></div>
<div class="rh" style="left:473.5px;top:196.7px;width:22.5px;height:28.3px"></div>
<div class="cell idc" style="left:496px;top:196.7px;width:35px;height:28.3px;line-height:28.3px"><span class="t">4</span></div>
<div class="cell" style="left:531px;top:196.7px;width:53px;height:28.3px"></div>
<div class="gck" style="left:550.0px;top:203.35px"><svg width="15" height="15" style="left:-1px;top:-1px"><path d="M4.2 7.2 L6.8 10.8 L11 3.6" fill="none" stroke="#4465a2" stroke-width="1.7"/></svg></div>
<div class="cell" style="left:584px;top:196.7px;width:53.5px;height:28.3px"></div>
<div class="gck" style="left:603.25px;top:203.35px"><svg width="15" height="15" style="left:-1px;top:-1px"><path d="M4.2 7.2 L6.8 10.8 L11 3.6" fill="none" stroke="#4465a2" stroke-width="1.7"/></svg></div>
<div class="cell" style="left:637.5px;top:196.7px;width:67.5px;height:28.3px;line-height:28.3px"><span class="t">314</span></div>
<div class="cell" style="left:705px;top:196.7px;width:66px;height:28.3px;line-height:28.3px"><span class="t">387</span></div>
<div class="cell" style="left:771px;top:196.7px;width:67px;height:28.3px;line-height:28.3px"><span class="t">1220</span></div>
<div class="cell" style="left:838px;top:196.7px;width:67.5px;height:28.3px;line-height:28.3px"><span class="t">1667</span></div>
<div class="rh" style="left:473.5px;top:225.0px;width:22.5px;height:28.3px"></div>
<div class="cell idc" style="left:496px;top:225.0px;width:35px;height:28.3px;line-height:28.3px"><span class="t">5</span></div>
<div class="cell" style="left:531px;top:225.0px;width:53px;height:28.3px"></div>
<div class="gck" style="left:550.0px;top:231.65px"><svg width="15" height="15" style="left:-1px;top:-1px"><path d="M4.2 7.2 L6.8 10.8 L11 3.6" fill="none" stroke="#4465a2" stroke-width="1.7"/></svg></div>
<div class="cell" style="left:584px;top:225.0px;width:53.5px;height:28.3px"></div>
<div class="gck" style="left:603.25px;top:231.65px"><svg width="15" height="15" style="left:-1px;top:-1px"><path d="M4.2 7.2 L6.8 10.8 L11 3.6" fill="none" stroke="#4465a2" stroke-width="1.7"/></svg></div>
<div class="cell" style="left:637.5px;top:225.0px;width:67.5px;height:28.3px;line-height:28.3px"><span class="t">258</span></div>
<div class="cell" style="left:705px;top:225.0px;width:66px;height:28.3px;line-height:28.3px"><span class="t">314</span></div>
<div class="cell" style="left:771px;top:225.0px;width:67px;height:28.3px;line-height:28.3px"><span class="t">1220</span></div>
<div class="cell" style="left:838px;top:225.0px;width:67.5px;height:28.3px;line-height:28.3px"><span class="t">1667</span></div>
<div class="rh" style="left:473.5px;top:253.3px;width:22.5px;height:28.3px"></div>
<div class="cell idc" style="left:496px;top:253.3px;width:35px;height:28.3px;line-height:28.3px"><span class="t">6</span></div>
<div class="cell" style="left:531px;top:253.3px;width:53px;height:28.3px"></div>
<div class="gck" style="left:550.0px;top:259.95px"><svg width="15" height="15" style="left:-1px;top:-1px"><path d="M4.2 7.2 L6.8 10.8 L11 3.6" fill="none" stroke="#4465a2" stroke-width="1.7"/></svg></div>
<div class="cell" style="left:584px;top:253.3px;width:53.5px;height:28.3px"></div>
<div class="gck" style="left:603.25px;top:259.95px"><svg width="15" height="15" style="left:-1px;top:-1px"><path d="M4.2 7.2 L6.8 10.8 L11 3.6" fill="none" stroke="#4465a2" stroke-width="1.7"/></svg></div>
<div class="cell" style="left:637.5px;top:253.3px;width:67.5px;height:28.3px;line-height:28.3px"><span class="t">330</span></div>
<div class="cell" style="left:705px;top:253.3px;width:66px;height:28.3px;line-height:28.3px"><span class="t">391</span></div>
<div class="cell" style="left:771px;top:253.3px;width:67px;height:28.3px;line-height:28.3px"><span class="t">1667</span></div>
<div class="cell" style="left:838px;top:253.3px;width:67.5px;height:28.3px;line-height:28.3px"><span class="t">1962</span></div>
<div class="rh" style="left:473.5px;top:281.6px;width:22.5px;height:28.3px"></div>
<div class="cell idc" style="left:496px;top:281.6px;width:35px;height:28.3px;line-height:28.3px"><span class="t">7</span></div>
<div class="cell" style="left:531px;top:281.6px;width:53px;height:28.3px"></div>
<div class="gck" style="left:550.0px;top:288.25px"><svg width="15" height="15" style="left:-1px;top:-1px"><path d="M4.2 7.2 L6.8 10.8 L11 3.6" fill="none" stroke="#4465a2" stroke-width="1.7"/></svg></div>
<div class="cell" style="left:584px;top:281.6px;width:53.5px;height:28.3px"></div>
<div class="gck" style="left:603.25px;top:288.25px"><svg width="15" height="15" style="left:-1px;top:-1px"><path d="M4.2 7.2 L6.8 10.8 L11 3.6" fill="none" stroke="#4465a2" stroke-width="1.7"/></svg></div>
<div class="cell" style="left:637.5px;top:281.6px;width:67.5px;height:28.3px;line-height:28.3px"><span class="t">267</span></div>
<div class="cell" style="left:705px;top:281.6px;width:66px;height:28.3px;line-height:28.3px"><span class="t">330</span></div>
<div class="cell" style="left:771px;top:281.6px;width:67px;height:28.3px;line-height:28.3px"><span class="t">1667</span></div>
<div class="cell" style="left:838px;top:281.6px;width:67.5px;height:28.3px;line-height:28.3px"><span class="t">1962</span></div>
<div class="rh" style="left:473.5px;top:309.9px;width:22.5px;height:28.3px"></div>
<div class="cell idc" style="left:496px;top:309.9px;width:35px;height:28.3px;line-height:28.3px"><span class="t">8</span></div>
<div class="cell" style="left:531px;top:309.9px;width:53px;height:28.3px"></div>
<div class="gck" style="left:550.0px;top:316.54999999999995px"><svg width="15" height="15" style="left:-1px;top:-1px"><path d="M4.2 7.2 L6.8 10.8 L11 3.6" fill="none" stroke="#4465a2" stroke-width="1.7"/></svg></div>
<div class="cell" style="left:584px;top:309.9px;width:53.5px;height:28.3px"></div>
<div class="gck" style="left:603.25px;top:316.54999999999995px"><svg width="15" height="15" style="left:-1px;top:-1px"><path d="M4.2 7.2 L6.8 10.8 L11 3.6" fill="none" stroke="#4465a2" stroke-width="1.7"/></svg></div>
<div class="cell" style="left:637.5px;top:309.9px;width:67.5px;height:28.3px;line-height:28.3px"><span class="t">292</span></div>
<div class="cell" style="left:705px;top:309.9px;width:66px;height:28.3px;line-height:28.3px"><span class="t">416</span></div>
<div class="cell" style="left:771px;top:309.9px;width:67px;height:28.3px;line-height:28.3px"><span class="t">1962</span></div>
<div class="cell" style="left:838px;top:309.9px;width:67.5px;height:28.3px;line-height:28.3px"><span class="t">2709</span></div>
<div class="rh" style="left:473.5px;top:338.20000000000005px;width:22.5px;height:28.3px"></div>
<div class="cell idc" style="left:496px;top:338.20000000000005px;width:35px;height:28.3px;line-height:28.3px"><span class="t">9</span></div>
<div class="cell" style="left:531px;top:338.20000000000005px;width:53px;height:28.3px"></div>
<div class="gck" style="left:550.0px;top:344.85px"><svg width="15" height="15" style="left:-1px;top:-1px"><path d="M4.2 7.2 L6.8 10.8 L11 3.6" fill="none" stroke="#4465a2" stroke-width="1.7"/></svg></div>
<div class="cell" style="left:584px;top:338.20000000000005px;width:53.5px;height:28.3px"></div>
<div class="gck" style="left:603.25px;top:344.85px"><svg width="15" height="15" style="left:-1px;top:-1px"><path d="M4.2 7.2 L6.8 10.8 L11 3.6" fill="none" stroke="#4465a2" stroke-width="1.7"/></svg></div>
<div class="cell" style="left:637.5px;top:338.20000000000005px;width:67.5px;height:28.3px;line-height:28.3px"><span class="t">292</span></div>
<div class="cell" style="left:705px;top:338.20000000000005px;width:66px;height:28.3px;line-height:28.3px"><span class="t">416</span></div>
<div class="cell" style="left:771px;top:338.20000000000005px;width:67px;height:28.3px;line-height:28.3px"><span class="t">1962</span></div>
<div class="cell" style="left:838px;top:338.20000000000005px;width:67.5px;height:28.3px;line-height:28.3px"><span class="t">2709</span></div>
<div class="rh" style="left:473.5px;top:366.5px;width:22.5px;height:28.3px"></div>
<div class="cell idc" style="left:496px;top:366.5px;width:35px;height:28.3px;line-height:28.3px"><span class="t">10</span></div>
<div class="cell" style="left:531px;top:366.5px;width:53px;height:28.3px"></div>
<div class="gck" style="left:550.0px;top:373.15px"><svg width="15" height="15" style="left:-1px;top:-1px"><path d="M4.2 7.2 L6.8 10.8 L11 3.6" fill="none" stroke="#4465a2" stroke-width="1.7"/></svg></div>
<div class="cell" style="left:584px;top:366.5px;width:53.5px;height:28.3px"></div>
<div class="gck" style="left:603.25px;top:373.15px"></div>
<div class="cell" style="left:637.5px;top:366.5px;width:67.5px;height:28.3px;line-height:28.3px"><span class="t">0</span></div>
<div class="cell" style="left:705px;top:366.5px;width:66px;height:28.3px;line-height:28.3px"><span class="t">0</span></div>
<div class="cell" style="left:771px;top:366.5px;width:67px;height:28.3px;line-height:28.3px"><span class="t">0</span></div>
<div class="cell" style="left:838px;top:366.5px;width:67.5px;height:28.3px;line-height:28.3px"><span class="t">0</span></div>
<div class="rh" style="left:473.5px;top:394.8px;width:22.5px;height:28.3px"></div>
<div class="cell idc" style="left:496px;top:394.8px;width:35px;height:28.3px;line-height:28.3px"><span class="t">11</span></div>
<div class="cell" style="left:531px;top:394.8px;width:53px;height:28.3px"></div>
<div class="gck" style="left:550.0px;top:401.45px"><svg width="15" height="15" style="left:-1px;top:-1px"><path d="M4.2 7.2 L6.8 10.8 L11 3.6" fill="none" stroke="#4465a2" stroke-width="1.7"/></svg></div>
<div class="cell" style="left:584px;top:394.8px;width:53.5px;height:28.3px"></div>
<div class="gck" style="left:603.25px;top:401.45px"></div>
<div class="cell" style="left:637.5px;top:394.8px;width:67.5px;height:28.3px;line-height:28.3px"><span class="t">0</span></div>
<div class="cell" style="left:705px;top:394.8px;width:66px;height:28.3px;line-height:28.3px"><span class="t">0</span></div>
<div class="cell" style="left:771px;top:394.8px;width:67px;height:28.3px;line-height:28.3px"><span class="t">0</span></div>
<div class="cell" style="left:838px;top:394.8px;width:67.5px;height:28.3px;line-height:28.3px"><span class="t">0</span></div>
<div class="rh" style="left:473.5px;top:423.1px;width:22.5px;height:28.3px"></div>
<div class="cell idc" style="left:496px;top:423.1px;width:35px;height:28.3px;line-height:28.3px"><span class="t">12</span></div>
<div class="cell" style="left:531px;top:423.1px;width:53px;height:28.3px"></div>
<div class="gck" style="left:550.0px;top:429.75px"><svg width="15" height="15" style="left:-1px;top:-1px"><path d="M4.2 7.2 L6.8 10.8 L11 3.6" fill="none" stroke="#4465a2" stroke-width="1.7"/></svg></div>
<div class="cell" style="left:584px;top:423.1px;width:53.5px;height:28.3px"></div>
<div class="gck" style="left:603.25px;top:429.75px"></div>
<div class="cell" style="left:637.5px;top:423.1px;width:67.5px;height:28.3px;line-height:28.3px"><span class="t">0</span></div>
<div class="cell" style="left:705px;top:423.1px;width:66px;height:28.3px;line-height:28.3px"><span class="t">0</span></div>
<div class="cell" style="left:771px;top:423.1px;width:67px;height:28.3px;line-height:28.3px"><span class="t">0</span></div>
<div class="cell" style="left:838px;top:423.1px;width:67.5px;height:28.3px;line-height:28.3px"><span class="t">0</span></div>
<div class="rh" style="left:473.5px;top:451.40000000000003px;width:22.5px;height:28.3px"></div>
<div class="cell idc" style="left:496px;top:451.40000000000003px;width:35px;height:28.3px;line-height:28.3px"><span class="t">13</span></div>
<div class="cell" style="left:531px;top:451.40000000000003px;width:53px;height:28.3px"></div>
<div class="gck" style="left:550.0px;top:458.05px"><svg width="15" height="15" style="left:-1px;top:-1px"><path d="M4.2 7.2 L6.8 10.8 L11 3.6" fill="none" stroke="#4465a2" stroke-width="1.7"/></svg></div>
<div class="cell" style="left:584px;top:451.40000000000003px;width:53.5px;height:28.3px"></div>
<div class="gck" style="left:603.25px;top:458.05px"></div>
<div class="cell" style="left:637.5px;top:451.40000000000003px;width:67.5px;height:28.3px;line-height:28.3px"><span class="t">0</span></div>
<div class="cell" style="left:705px;top:451.40000000000003px;width:66px;height:28.3px;line-height:28.3px"><span class="t">0</span></div>
<div class="cell" style="left:771px;top:451.40000000000003px;width:67px;height:28.3px;line-height:28.3px"><span class="t">0</span></div>
<div class="cell" style="left:838px;top:451.40000000000003px;width:67.5px;height:28.3px;line-height:28.3px"><span class="t">0</span></div>
<div class="rh" style="left:473.5px;top:479.7px;width:22.5px;height:28.3px"></div>
<div class="cell idc" style="left:496px;top:479.7px;width:35px;height:28.3px;line-height:28.3px"><span class="t">14</span></div>
<div class="cell" style="left:531px;top:479.7px;width:53px;height:28.3px"></div>
<div class="gck" style="left:550.0px;top:486.34999999999997px"><svg width="15" height="15" style="left:-1px;top:-1px"><path d="M4.2 7.2 L6.8 10.8 L11 3.6" fill="none" stroke="#4465a2" stroke-width="1.7"/></svg></div>
<div class="cell" style="left:584px;top:479.7px;width:53.5px;height:28.3px"></div>
<div class="gck" style="left:603.25px;top:486.34999999999997px"></div>
<div class="cell" style="left:637.5px;top:479.7px;width:67.5px;height:28.3px;line-height:28.3px"><span class="t">0</span></div>
<div class="cell" style="left:705px;top:479.7px;width:66px;height:28.3px;line-height:28.3px"><span class="t">0</span></div>
<div class="cell" style="left:771px;top:479.7px;width:67px;height:28.3px;line-height:28.3px"><span class="t">0</span></div>
<div class="cell" style="left:838px;top:479.7px;width:67.5px;height:28.3px;line-height:28.3px"><span class="t">0</span></div>
<div class="rh" style="left:473.5px;top:508.0px;width:22.5px;height:28.3px"></div>
<div class="cell idc" style="left:496px;top:508.0px;width:35px;height:28.3px;line-height:28.3px"><span class="t">15</span></div>
<div class="cell" style="left:531px;top:508.0px;width:53px;height:28.3px"></div>
<div class="gck" style="left:550.0px;top:514.65px"><svg width="15" height="15" style="left:-1px;top:-1px"><path d="M4.2 7.2 L6.8 10.8 L11 3.6" fill="none" stroke="#4465a2" stroke-width="1.7"/></svg></div>
<div class="cell" style="left:584px;top:508.0px;width:53.5px;height:28.3px"></div>
<div class="gck" style="left:603.25px;top:514.65px"></div>
<div class="cell" style="left:637.5px;top:508.0px;width:67.5px;height:28.3px;line-height:28.3px"><span class="t">0</span></div>
<div class="cell" style="left:705px;top:508.0px;width:66px;height:28.3px;line-height:28.3px"><span class="t">0</span></div>
<div class="cell" style="left:771px;top:508.0px;width:67px;height:28.3px;line-height:28.3px"><span class="t">0</span></div>
<div class="cell" style="left:838px;top:508.0px;width:67.5px;height:28.3px;line-height:28.3px"><span class="t">0</span></div>
<div class="rh" style="left:473.5px;top:536.3px;width:22.5px;height:28.3px"></div>
<div class="cell idc" style="left:496px;top:536.3px;width:35px;height:28.3px;line-height:28.3px"><span class="t">G</span></div>
<div class="cell" style="left:531px;top:536.3px;width:53px;height:28.3px"></div>
<div class="gck" style="left:550.0px;top:542.9499999999999px"><svg width="15" height="15" style="left:-1px;top:-1px"><path d="M4.2 7.2 L6.8 10.8 L11 3.6" fill="none" stroke="#4465a2" stroke-width="1.7"/></svg></div>
<div class="cell" style="left:584px;top:536.3px;width:53.5px;height:28.3px"></div>
<div class="gck" style="left:603.25px;top:542.9499999999999px"><svg width="15" height="15" style="left:-1px;top:-1px"><path d="M4.2 7.2 L6.8 10.8 L11 3.6" fill="none" stroke="#4465a2" stroke-width="1.7"/></svg></div>
<div class="cell" style="left:637.5px;top:536.3px;width:67.5px;height:28.3px;line-height:28.3px"><span class="t">82</span></div>
<div class="cell" style="left:705px;top:536.3px;width:66px;height:28.3px;line-height:28.3px"><span class="t">219</span></div>
<div class="cell" style="left:771px;top:536.3px;width:67px;height:28.3px;line-height:28.3px"><span class="t">813</span></div>
<div class="cell" style="left:838px;top:536.3px;width:67.5px;height:28.3px;line-height:28.3px"><span class="t">1739</span></div>
<div style="left:473.5px;top:56px;width:432.0px;height:508.6px;border:1px solid #a7bbd6;border-bottom:none;border-right-color:#c5d3e6"></div>
<div class="grp" style="left:469.5px;top:584px;width:440px;height:317.5px"></div>
<div class="lb gt" style="left:477.5px;top:576px">Calibrate Files Panel</div>
<div class="tb" style="left:482px;top:596.5px;width:359px;height:24px"></div>
<div class="cbtn" style="left:849px;top:595.0px;width:45.5px;height:27px;line-height:27px;background:#ff69b4;color:#fde8f2"><span class="t">A</span></div>
<div class="tb" style="left:482px;top:629.6px;width:359px;height:24px"></div>
<div class="cbtn" style="left:849px;top:628.1px;width:45.5px;height:27px;line-height:27px;background:#ffa000;color:#fff3dc"><span class="t">C</span></div>
<div class="tb" style="left:482px;top:662.7px;width:359px;height:24px"></div>
<div class="cbtn" style="left:849px;top:661.2px;width:45.5px;height:27px;line-height:27px;background:#ffff00;color:#3a3a20"><span class="t">T</span></div>
<div class="tb" style="left:482px;top:695.8px;width:359px;height:24px"></div>
<div class="cbtn" style="left:849px;top:694.3px;width:45.5px;height:27px;line-height:27px;background:#007a00;color:#d8f0d8"><span class="t">H</span></div>
<div class="tb" style="left:482px;top:728.9px;width:359px;height:24px"></div>
<div class="cbtn" style="left:849px;top:727.4px;width:45.5px;height:27px;line-height:27px;background:#00ffff;color:#1f6f88"><span class="t">D50</span></div>
<div class="tb" style="left:482px;top:762.0px;width:359px;height:24px"></div>
<div class="cbtn" style="left:849px;top:760.5px;width:45.5px;height:27px;line-height:27px;background:#0000ff;color:#e8e8ff"><span class="t">D65</span></div>
<div class="tb" style="left:482px;top:795.1px;width:359px;height:24px"></div>
<div class="cbtn" style="left:849px;top:793.6px;width:45.5px;height:27px;line-height:27px;background:#7f007f;color:#f0dcf0"><span class="t">D75</span></div>
<div class="lb" style="left:484px;top:835px;">Percentage</div>
<div class="sld" style="left:565px;top:828px;width:276px;height:24px"><div class="sldtr" style="top:9.0px;width:272px"></div><div class="sldth" style="left:50px"></div></div>
<div class="lb" style="left:850px;top:835px;">20%</div>
<div class="btn def" style="left:485px;top:861px;width:105px;height:29.5px;line-height:27.5px"><span class="t">Optimize</span></div>
<div class="btn" style="left:677px;top:861px;width:106px;height:29.5px;line-height:27.5px;"><span class="t">Load Config</span></div>
<div class="btn dis" style="left:791px;top:861px;width:106.5px;height:29.5px;line-height:27.5px;"><span class="t">Save Config</span></div>
<div class="grp" style="left:469.5px;top:919px;width:440px;height:203.5px"></div>
<div class="lb" style="left:488px;top:939px;">Image Width</div>
<div class="tb" style="left:624px;top:933px;width:83px;height:24px"></div>
<div class="lb" style="left:714px;top:939px;">Image Height</div>
<div class="tb" style="left:815px;top:933px;width:83px;height:24px"></div>
<div class="lb" style="left:488px;top:974px;">Black Level(10bit)</div>
<div class="tb" style="left:624px;top:968.5px;width:83px;height:23.5px"></div>
<div class="lb" style="left:714px;top:974px;">Raw Bit Depth</div>
<div class="tb" style="left:815px;top:968.5px;width:83px;height:23.5px"></div>
<div class="grp" style="left:481.5px;top:1008px;width:416.5px;height:56px"></div>
<div class="lb gt dis" style="left:489.5px;top:1000px">Bayer Patten</div>
<div class="radio" style="left:504.8px;top:1031.5px"></div>
<div style="left:530.5px;top:1024px;width:28.5px;height:28.5px;background:linear-gradient(90deg,#0000ff 50%,#00e000 50%) top/100% 50% no-repeat,linear-gradient(90deg,#00e000 50%,#ff0000 50%) bottom/100% 50% no-repeat"></div>
<div class="radio" style="left:582.65px;top:1031.5px"></div>
<div style="left:608.4px;top:1024px;width:28.5px;height:28.5px;background:linear-gradient(90deg,#00e000 50%,#0000ff 50%) top/100% 50% no-repeat,linear-gradient(90deg,#ff0000 50%,#00e000 50%) bottom/100% 50% no-repeat"></div>
<div class="radio" style="left:660.5px;top:1031.5px"></div>
<div style="left:686.3px;top:1024px;width:28.5px;height:28.5px;background:linear-gradient(90deg,#00e000 50%,#ff0000 50%) top/100% 50% no-repeat,linear-gradient(90deg,#0000ff 50%,#00e000 50%) bottom/100% 50% no-repeat"></div>
<div class="radio" style="left:738.35px;top:1031.5px"></div>
<div style="left:764.2px;top:1024px;width:28.5px;height:28.5px;background:linear-gradient(90deg,#ff0000 50%,#00e000 50%) top/100% 50% no-repeat,linear-gradient(90deg,#00e000 50%,#0000ff 50%) bottom/100% 50% no-repeat"></div>
<div class="radio" style="left:816.2px;top:1031.5px"></div>
<div style="left:842.1px;top:1024px;width:28.5px;height:28.5px;background:#fff"></div>
<div class="btn" style="left:481.3px;top:1080.3px;width:76.40000000000003px;height:28.5px;line-height:26.5px;"><span class="t">Load</span></div>
<div class="btn" style="left:566.4px;top:1080.3px;width:76.20000000000005px;height:28.5px;line-height:26.5px;"><span class="t">Calibrate</span></div>
<div class="btn" style="left:651px;top:1080.3px;width:76.20000000000005px;height:28.5px;line-height:26.5px;"><span class="t">Update</span></div>
<div class="btn dis" style="left:736.2px;top:1080.3px;width:75.79999999999995px;height:28.5px;line-height:26.5px;"><span class="t">Cancel</span></div>
<div class="btn" style="left:821px;top:1080.3px;width:76.39999999999998px;height:28.5px;line-height:26.5px;"><span class="t">Show ROI</span></div>
<svg style="left:921.4px;top:43.7px" width="453" height="340" shape-rendering="crispEdges"><rect x="0.00" y="0.00" width="14.56" height="14.57" fill="#0a130d"/><rect x="14.16" y="0.00" width="14.56" height="14.57" fill="#09120c"/><rect x="28.31" y="0.00" width="14.56" height="14.57" fill="#0b150f"/><rect x="42.47" y="0.00" width="14.56" height="14.57" fill="#0d1912"/><rect x="56.62" y="0.00" width="14.56" height="14.57" fill="#0d1912"/><rect x="70.78" y="0.00" width="14.56" height="14.57" fill="#0d1912"/><rect x="84.94" y="0.00" width="14.56" height="14.57" fill="#0d1912"/><rect x="99.09" y="0.00" width="14.56" height="14.57" fill="#0d1912"/><rect x="113.25" y="0.00" width="14.56" height="14.57" fill="#0d1912"/><rect x="127.41" y="0.00" width="14.56" height="14.57" fill="#0d1912"/><rect x="141.56" y="0.00" width="14.56" height="14.57" fill="#0d1912"/><rect x="155.72" y="0.00" width="14.56" height="14.57" fill="#0d1912"/><rect x="169.88" y="0.00" width="14.56" height="14.57" fill="#0d1912"/><rect x="184.03" y="0.00" width="14.56" height="14.57" fill="#0d1912"/><rect x="198.19" y="0.00" width="14.56" height="14.57" fill="#0d1912"/><rect x="212.34" y="0.00" width="14.56" height="14.57" fill="#0d1912"/><rect x="226.50" y="0.00" width="14.56" height="14.57" fill="#0d1912"/><rect x="240.66" y="0.00" width="14.56" height="14.57" fill="#18301e"/><rect x="254.81" y="0.00" width="14.56" height="14.57" fill="#223a22"/><rect x="268.97" y="0.00" width="14.56" height="14.57" fill="#4a8a45"/><rect x="283.12" y="0.00" width="14.56" height="14.57" fill="#000000"/><rect x="297.28" y="0.00" width="14.56" height="14.57" fill="#62b86a"/><rect x="311.44" y="0.00" width="14.56" height="14.57" fill="#3e7a52"/><rect x="325.59" y="0.00" width="14.56" height="14.57" fill="#3f6a45"/><rect x="339.75" y="0.00" width="14.56" height="14.57" fill="#2a3322"/><rect x="353.91" y="0.00" width="14.56" height="14.57" fill="#141a12"/><rect x="368.06" y="0.00" width="14.56" height="14.57" fill="#162b1c"/><rect x="382.22" y="0.00" width="14.56" height="14.57" fill="#1d3a24"/><rect x="396.38" y="0.00" width="14.56" height="14.57" fill="#264a30"/><rect x="410.53" y="0.00" width="14.56" height="14.57" fill="#2a5232"/><rect x="424.69" y="0.00" width="14.56" height="14.57" fill="#2a5232"/><rect x="438.84" y="0.00" width="14.56" height="14.57" fill="#264a30"/><rect x="0.00" y="14.17" width="14.56" height="14.57" fill="#0a130d"/><rect x="14.16" y="14.17" width="14.56" height="14.57" fill="#09120c"/><rect x="28.31" y="14.17" width="14.56" height="14.57" fill="#0b150f"/><rect x="42.47" y="14.17" width="14.56" height="14.57" fill="#0d1912"/><rect x="56.62" y="14.17" width="14.56" height="14.57" fill="#0d1912"/><rect x="70.78" y="14.17" width="14.56" height="14.57" fill="#0d1912"/><rect x="84.94" y="14.17" width="14.56" height="14.57" fill="#0d1912"/><rect x="99.09" y="14.17" width="14.56" height="14.57" fill="#0d1912"/><rect x="113.25" y="14.17" width="14.56" height="14.57" fill="#0d1912"/><rect x="127.41" y="14.17" width="14.56" height="14.57" fill="#0d1912"/><rect x="141.56" y="14.17" width="14.56" height="14.57" fill="#0d1912"/><rect x="155.72" y="14.17" width="14.56" height="14.57" fill="#0d1912"/><rect x="169.88" y="14.17" width="14.56" height="14.57" fill="#0d1912"/><rect x="184.03" y="14.17" width="14.56" height="14.57" fill="#0d1912"/><rect x="198.19" y="14.17" width="14.56" height="14.57" fill="#0d1912"/><rect x="212.34" y="14.17" width="14.56" height="14.57" fill="#0d1912"/><rect x="226.50" y="14.17" width="14.56" height="14.57" fill="#0d1912"/><rect x="240.66" y="14.17" width="14.56" height="14.57" fill="#0d1912"/><rect x="254.81" y="14.17" width="14.56" height="14.57" fill="#0d1912"/><rect x="268.97" y="14.17" width="14.56" height="14.57" fill="#213e24"/><rect x="283.12" y="14.17" width="14.56" height="14.57" fill="#5aa455"/><rect x="297.28" y="14.17" width="14.56" height="14.57" fill="#000000"/><rect x="311.44" y="14.17" width="14.56" height="14.57" fill="#52a565"/><rect x="325.59" y="14.17" width="14.56" height="14.57" fill="#3a6a52"/><rect x="339.75" y="14.17" width="14.56" height="14.57" fill="#2c3d2a"/><rect x="353.91" y="14.17" width="14.56" height="14.57" fill="#201c12"/><rect x="368.06" y="14.17" width="14.56" height="14.57" fill="#1c2e1e"/><rect x="382.22" y="14.17" width="14.56" height="14.57" fill="#182c1c"/><rect x="396.38" y="14.17" width="14.56" height="14.57" fill="#264a30"/><rect x="410.53" y="14.17" width="14.56" height="14.57" fill="#2a5232"/><rect x="424.69" y="14.17" width="14.56" height="14.57" fill="#2a5232"/><rect x="438.84" y="14.17" width="14.56" height="14.57" fill="#2a5232"/><rect x="0.00" y="28.33" width="14.56" height="14.57" fill="#0a130d"/><rect x="14.16" y="28.33" width="14.56" height="14.57" fill="#09120c"/><rect x="28.31" y="28.33" width="14.56" height="14.57" fill="#0b150f"/><rect x="42.47" y="28.33" width="14.56" height="14.57" fill="#0d1912"/><rect x="56.62" y="28.33" width="14.56" height="14.57" fill="#0d1912"/><rect x="70.78" y="28.33" width="14.56" height="14.57" fill="#0d1912"/><rect x="84.94" y="28.33" width="14.56" height="14.57" fill="#0d1912"/><rect x="99.09" y="28.33" width="14.56" height="14.57" fill="#0d1912"/><rect x="113.25" y="28.33" width="14.56" height="14.57" fill="#0d1912"/><rect x="127.41" y="28.33" width="14.56" height="14.57" fill="#0d1912"/><rect x="141.56" y="28.33" width="14.56" height="14.57" fill="#0d1912"/><rect x="155.72" y="28.33" width="14.56" height="14.57" fill="#0d1912"/><rect x="169.88" y="28.33" width="14.56" height="14.57" fill="#0d1912"/><rect x="184.03" y="28.33" width="14.56" height="14.57" fill="#0d1912"/><rect x="198.19" y="28.33" width="14.56" height="14.57" fill="#0d1912"/><rect x="212.34" y="28.33" width="14.56" height="14.57" fill="#0d1912"/><rect x="226.50" y="28.33" width="14.56" height="14.57" fill="#0d1912"/><rect x="240.66" y="28.33" width="14.56" height="14.57" fill="#0d1912"/><rect x="254.81" y="28.33" width="14.56" height="14.57" fill="#0d1912"/><rect x="268.97" y="28.33" width="14.56" height="14.57" fill="#0e1a12"/><rect x="283.12" y="28.33" width="14.56" height="14.57" fill="#2f5a30"/><rect x="297.28" y="28.33" width="14.56" height="14.57" fill="#62b462"/><rect x="311.44" y="28.33" width="14.56" height="14.57" fill="#62c070"/><rect x="325.59" y="28.33" width="14.56" height="14.57" fill="#3a7a58"/><rect x="339.75" y="28.33" width="14.56" height="14.57" fill="#2a4a42"/><rect x="353.91" y="28.33" width="14.56" height="14.57" fill="#2a2418"/><rect x="368.06" y="28.33" width="14.56" height="14.57" fill="#2c2a1c"/><rect x="382.22" y="28.33" width="14.56" height="14.57" fill="#1c2e1e"/><rect x="396.38" y="28.33" width="14.56" height="14.57" fill="#1c3220"/><rect x="410.53" y="28.33" width="14.56" height="14.57" fill="#264a30"/><rect x="424.69" y="28.33" width="14.56" height="14.57" fill="#2a5232"/><rect x="438.84" y="28.33" width="14.56" height="14.57" fill="#2a5232"/><rect x="0.00" y="42.50" width="14.56" height="14.57" fill="#0a130d"/><rect x="14.16" y="42.50" width="14.56" height="14.57" fill="#09120c"/><rect x="28.31" y="42.50" width="14.56" height="14.57" fill="#0b150f"/><rect x="42.47" y="42.50" width="14.56" height="14.57" fill="#0d1912"/><rect x="56.62" y="42.50" width="14.56" height="14.57" fill="#0d1912"/><rect x="70.78" y="42.50" width="14.56" height="14.57" fill="#0d1912"/><rect x="84.94" y="42.50" width="14.56" height="14.57" fill="#0d1912"/><rect x="99.09" y="42.50" width="14.56" height="14.57" fill="#0d1912"/><rect x="113.25" y="42.50" width="14.56" height="14.57" fill="#0d1912"/><rect x="127.41" y="42.50" width="14.56" height="14.57" fill="#0d1912"/><rect x="141.56" y="42.50" width="14.56" height="14.57" fill="#0d1912"/><rect x="155.72" y="42.50" width="14.56" height="14.57" fill="#0d1912"/><rect x="169.88" y="42.50" width="14.56" height="14.57" fill="#0d1912"/><rect x="184.03" y="42.50" width="14.56" height="14.57" fill="#0d1912"/><rect x="198.19" y="42.50" width="14.56" height="14.57" fill="#0d1912"/><rect x="212.34" y="42.50" width="14.56" height="14.57" fill="#0d1912"/><rect x="226.50" y="42.50" width="14.56" height="14.57" fill="#0d1912"/><rect x="240.66" y="42.50" width="14.56" height="14.57" fill="#0d1912"/><rect x="254.81" y="42.50" width="14.56" height="14.57" fill="#0d1912"/><rect x="268.97" y="42.50" width="14.56" height="14.57" fill="#0e1a12"/><rect x="283.12" y="42.50" width="14.56" height="14.57" fill="#0e1a12"/><rect x="297.28" y="42.50" width="14.56" height="14.57" fill="#2a4a2a"/><rect x="311.44" y="42.50" width="14.56" height="14.57" fill="#2e5a34"/><rect x="325.59" y="42.50" width="14.56" height="14.57" fill="#1e3c2a"/><rect x="339.75" y="42.50" width="14.56" height="14.57" fill="#2e5a50"/><rect x="353.91" y="42.50" width="14.56" height="14.57" fill="#2c4a44"/><rect x="368.06" y="42.50" width="14.56" height="14.57" fill="#36382c"/><rect x="382.22" y="42.50" width="14.56" height="14.57" fill="#302e1e"/><rect x="396.38" y="42.50" width="14.56" height="14.57" fill="#1c3220"/><rect x="410.53" y="42.50" width="14.56" height="14.57" fill="#1a2e1c"/><rect x="424.69" y="42.50" width="14.56" height="14.57" fill="#264a30"/><rect x="438.84" y="42.50" width="14.56" height="14.57" fill="#2a5232"/><rect x="0.00" y="56.67" width="14.56" height="14.57" fill="#0a130d"/><rect x="14.16" y="56.67" width="14.56" height="14.57" fill="#09120c"/><rect x="28.31" y="56.67" width="14.56" height="14.57" fill="#0b150f"/><rect x="42.47" y="56.67" width="14.56" height="14.57" fill="#0d1912"/><rect x="56.62" y="56.67" width="14.56" height="14.57" fill="#0d1912"/><rect x="70.78" y="56.67" width="14.56" height="14.57" fill="#0d1912"/><rect x="84.94" y="56.67" width="14.56" height="14.57" fill="#0d1912"/><rect x="99.09" y="56.67" width="14.56" height="14.57" fill="#0d1912"/><rect x="113.25" y="56.67" width="14.56" height="14.57" fill="#0d1912"/><rect x="127.41" y="56.67" width="14.56" height="14.57" fill="#0d1912"/><rect x="141.56" y="56.67" width="14.56" height="14.57" fill="#0d1912"/><rect x="155.72" y="56.67" width="14.56" height="14.57" fill="#0d1912"/><rect x="169.88" y="56.67" width="14.56" height="14.57" fill="#0d1912"/><rect x="184.03" y="56.67" width="14.56" height="14.57" fill="#0d1912"/><rect x="198.19" y="56.67" width="14.56" height="14.57" fill="#0d1912"/><rect x="212.34" y="56.67" width="14.56" height="14.57" fill="#0d1912"/><rect x="226.50" y="56.67" width="14.56" height="14.57" fill="#0d1912"/><rect x="240.66" y="56.67" width="14.56" height="14.57" fill="#0d1912"/><rect x="254.81" y="56.67" width="14.56" height="14.57" fill="#0d1912"/><rect x="268.97" y="56.67" width="14.56" height="14.57" fill="#0c1610"/><rect x="283.12" y="56.67" width="14.56" height="14.57" fill="#0c1610"/><rect x="297.28" y="56.67" width="14.56" height="14.57" fill="#0b140e"/><rect x="311.44" y="56.67" width="14.56" height="14.57" fill="#090f0b"/><rect x="325.59" y="56.67" width="14.56" height="14.57" fill="#19301f"/><rect x="339.75" y="56.67" width="14.56" height="14.57" fill="#2e6044"/><rect x="353.91" y="56.67" width="14.56" height="14.57" fill="#224540"/><rect x="368.06" y="56.67" width="14.56" height="14.57" fill="#36564e"/><rect x="382.22" y="56.67" width="14.56" height="14.57" fill="#3a4234"/><rect x="396.38" y="56.67" width="14.56" height="14.57" fill="#30321e"/><rect x="410.53" y="56.67" width="14.56" height="14.57" fill="#1c2e1e"/><rect x="424.69" y="56.67" width="14.56" height="14.57" fill="#1a2e1c"/><rect x="438.84" y="56.67" width="14.56" height="14.57" fill="#2a5232"/><rect x="0.00" y="70.83" width="14.56" height="14.57" fill="#0a130d"/><rect x="14.16" y="70.83" width="14.56" height="14.57" fill="#09120c"/><rect x="28.31" y="70.83" width="14.56" height="14.57" fill="#0b150f"/><rect x="42.47" y="70.83" width="14.56" height="14.57" fill="#0d1912"/><rect x="56.62" y="70.83" width="14.56" height="14.57" fill="#0d1912"/><rect x="70.78" y="70.83" width="14.56" height="14.57" fill="#0d1912"/><rect x="84.94" y="70.83" width="14.56" height="14.57" fill="#0d1912"/><rect x="99.09" y="70.83" width="14.56" height="14.57" fill="#0d1912"/><rect x="113.25" y="70.83" width="14.56" height="14.57" fill="#0d1912"/><rect x="127.41" y="70.83" width="14.56" height="14.57" fill="#0d1912"/><rect x="141.56" y="70.83" width="14.56" height="14.57" fill="#0d1912"/><rect x="155.72" y="70.83" width="14.56" height="14.57" fill="#0d1912"/><rect x="169.88" y="70.83" width="14.56" height="14.57" fill="#0d1912"/><rect x="184.03" y="70.83" width="14.56" height="14.57" fill="#0d1912"/><rect x="198.19" y="70.83" width="14.56" height="14.57" fill="#0d1912"/><rect x="212.34" y="70.83" width="14.56" height="14.57" fill="#0d1912"/><rect x="226.50" y="70.83" width="14.56" height="14.57" fill="#0d1912"/><rect x="240.66" y="70.83" width="14.56" height="14.57" fill="#0d1912"/><rect x="254.81" y="70.83" width="14.56" height="14.57" fill="#0d1912"/><rect x="268.97" y="70.83" width="14.56" height="14.57" fill="#0c1610"/><rect x="283.12" y="70.83" width="14.56" height="14.57" fill="#0c1610"/><rect x="297.28" y="70.83" width="14.56" height="14.57" fill="#0b140e"/><rect x="311.44" y="70.83" width="14.56" height="14.57" fill="#090f0b"/><rect x="325.59" y="70.83" width="14.56" height="14.57" fill="#1b331e"/><rect x="339.75" y="70.83" width="14.56" height="14.57" fill="#1a3020"/><rect x="353.91" y="70.83" width="14.56" height="14.57" fill="#121e16"/><rect x="368.06" y="70.83" width="14.56" height="14.57" fill="#1a2e2a"/><rect x="382.22" y="70.83" width="14.56" height="14.57" fill="#2e4640"/><rect x="396.38" y="70.83" width="14.56" height="14.57" fill="#3a3024"/><rect x="410.53" y="70.83" width="14.56" height="14.57" fill="#343822"/><rect x="424.69" y="70.83" width="14.56" height="14.57" fill="#1a2e1e"/><rect x="438.84" y="70.83" width="14.56" height="14.57" fill="#162a1c"/><rect x="0.00" y="85.00" width="14.56" height="14.57" fill="#0a130d"/><rect x="14.16" y="85.00" width="14.56" height="14.57" fill="#09120c"/><rect x="28.31" y="85.00" width="14.56" height="14.57" fill="#0b150f"/><rect x="42.47" y="85.00" width="14.56" height="14.57" fill="#0d1912"/><rect x="56.62" y="85.00" width="14.56" height="14.57" fill="#0d1912"/><rect x="70.78" y="85.00" width="14.56" height="14.57" fill="#0d1912"/><rect x="84.94" y="85.00" width="14.56" height="14.57" fill="#0d1912"/><rect x="99.09" y="85.00" width="14.56" height="14.57" fill="#0d1912"/><rect x="113.25" y="85.00" width="14.56" height="14.57" fill="#0d1912"/><rect x="127.41" y="85.00" width="14.56" height="14.57" fill="#0d1912"/><rect x="141.56" y="85.00" width="14.56" height="14.57" fill="#0d1912"/><rect x="155.72" y="85.00" width="14.56" height="14.57" fill="#0d1912"/><rect x="169.88" y="85.00" width="14.56" height="14.57" fill="#0d1912"/><rect x="184.03" y="85.00" width="14.56" height="14.57" fill="#0d1912"/><rect x="198.19" y="85.00" width="14.56" height="14.57" fill="#0d1912"/><rect x="212.34" y="85.00" width="14.56" height="14.57" fill="#0d1912"/><rect x="226.50" y="85.00" width="14.56" height="14.57" fill="#0d1912"/><rect x="240.66" y="85.00" width="14.56" height="14.57" fill="#0d1912"/><rect x="254.81" y="85.00" width="14.56" height="14.57" fill="#0d1912"/><rect x="268.97" y="85.00" width="14.56" height="14.57" fill="#0c1610"/><rect x="283.12" y="85.00" width="14.56" height="14.57" fill="#0c1610"/><rect x="297.28" y="85.00" width="14.56" height="14.57" fill="#0b140e"/><rect x="311.44" y="85.00" width="14.56" height="14.57" fill="#090f0b"/><rect x="325.59" y="85.00" width="14.56" height="14.57" fill="#19301f"/><rect x="339.75" y="85.00" width="14.56" height="14.57" fill="#224530"/><rect x="353.91" y="85.00" width="14.56" height="14.57" fill="#111e15"/><rect x="368.06" y="85.00" width="14.56" height="14.57" fill="#0c160f"/><rect x="382.22" y="85.00" width="14.56" height="14.57" fill="#1e3a28"/><rect x="396.38" y="85.00" width="14.56" height="14.57" fill="#2a402e"/><rect x="410.53" y="85.00" width="14.56" height="14.57" fill="#3a3420"/><rect x="424.69" y="85.00" width="14.56" height="14.57" fill="#38482c"/><rect x="438.84" y="85.00" width="14.56" height="14.57" fill="#224434"/><rect x="0.00" y="99.17" width="14.56" height="14.57" fill="#0a130d"/><rect x="14.16" y="99.17" width="14.56" height="14.57" fill="#09120c"/><rect x="28.31" y="99.17" width="14.56" height="14.57" fill="#0b150f"/><rect x="42.47" y="99.17" width="14.56" height="14.57" fill="#0d1912"/><rect x="56.62" y="99.17" width="14.56" height="14.57" fill="#0d1912"/><rect x="70.78" y="99.17" width="14.56" height="14.57" fill="#0d1912"/><rect x="84.94" y="99.17" width="14.56" height="14.57" fill="#0d1912"/><rect x="99.09" y="99.17" width="14.56" height="14.57" fill="#0d1912"/><rect x="113.25" y="99.17" width="14.56" height="14.57" fill="#0d1912"/><rect x="127.41" y="99.17" width="14.56" height="14.57" fill="#0d1912"/><rect x="141.56" y="99.17" width="14.56" height="14.57" fill="#0d1912"/><rect x="155.72" y="99.17" width="14.56" height="14.57" fill="#0d1912"/><rect x="169.88" y="99.17" width="14.56" height="14.57" fill="#0d1912"/><rect x="184.03" y="99.17" width="14.56" height="14.57" fill="#0d1912"/><rect x="198.19" y="99.17" width="14.56" height="14.57" fill="#0d1912"/><rect x="212.34" y="99.17" width="14.56" height="14.57" fill="#0d1912"/><rect x="226.50" y="99.17" width="14.56" height="14.57" fill="#0d1912"/><rect x="240.66" y="99.17" width="14.56" height="14.57" fill="#0d1912"/><rect x="254.81" y="99.17" width="14.56" height="14.57" fill="#0d1912"/><rect x="268.97" y="99.17" width="14.56" height="14.57" fill="#0c1610"/><rect x="283.12" y="99.17" width="14.56" height="14.57" fill="#0c1610"/><rect x="297.28" y="99.17" width="14.56" height="14.57" fill="#0b140e"/><rect x="311.44" y="99.17" width="14.56" height="14.57" fill="#090f0b"/><rect x="325.59" y="99.17" width="14.56" height="14.57" fill="#244c30"/><rect x="339.75" y="99.17" width="14.56" height="14.57" fill="#264e30"/><rect x="353.91" y="99.17" width="14.56" height="14.57" fill="#111e15"/><rect x="368.06" y="99.17" width="14.56" height="14.57" fill="#0c160f"/><rect x="382.22" y="99.17" width="14.56" height="14.57" fill="#1e3a26"/><rect x="396.38" y="99.17" width="14.56" height="14.57" fill="#2e5a38"/><rect x="410.53" y="99.17" width="14.56" height="14.57" fill="#2c4a2c"/><rect x="424.69" y="99.17" width="14.56" height="14.57" fill="#383e30"/><rect x="438.84" y="99.17" width="14.56" height="14.57" fill="#3e5e4a"/><rect x="0.00" y="113.33" width="14.56" height="14.57" fill="#15281e"/><rect x="14.16" y="113.33" width="14.56" height="14.57" fill="#0d1912"/><rect x="28.31" y="113.33" width="14.56" height="14.57" fill="#0d1912"/><rect x="42.47" y="113.33" width="14.56" height="14.57" fill="#0d1912"/><rect x="56.62" y="113.33" width="14.56" height="14.57" fill="#0d1912"/><rect x="70.78" y="113.33" width="14.56" height="14.57" fill="#0d1912"/><rect x="84.94" y="113.33" width="14.56" height="14.57" fill="#0d1912"/><rect x="99.09" y="113.33" width="14.56" height="14.57" fill="#0d1912"/><rect x="113.25" y="113.33" width="14.56" height="14.57" fill="#0d1912"/><rect x="127.41" y="113.33" width="14.56" height="14.57" fill="#0d1912"/><rect x="141.56" y="113.33" width="14.56" height="14.57" fill="#0d1912"/><rect x="155.72" y="113.33" width="14.56" height="14.57" fill="#0d1912"/><rect x="169.88" y="113.33" width="14.56" height="14.57" fill="#0d1912"/><rect x="184.03" y="113.33" width="14.56" height="14.57" fill="#0d1912"/><rect x="198.19" y="113.33" width="14.56" height="14.57" fill="#0d1912"/><rect x="212.34" y="113.33" width="14.56" height="14.57" fill="#0d1912"/><rect x="226.50" y="113.33" width="14.56" height="14.57" fill="#0d1912"/><rect x="240.66" y="113.33" width="14.56" height="14.57" fill="#0d1912"/><rect x="254.81" y="113.33" width="14.56" height="14.57" fill="#0d1912"/><rect x="268.97" y="113.33" width="14.56" height="14.57" fill="#0c1610"/><rect x="283.12" y="113.33" width="14.56" height="14.57" fill="#0c1610"/><rect x="297.28" y="113.33" width="14.56" height="14.57" fill="#0b140e"/><rect x="311.44" y="113.33" width="14.56" height="14.57" fill="#090f0b"/><rect x="325.59" y="113.33" width="14.56" height="14.57" fill="#264e32"/><rect x="339.75" y="113.33" width="14.56" height="14.57" fill="#264e32"/><rect x="353.91" y="113.33" width="14.56" height="14.57" fill="#0f1a12"/><rect x="368.06" y="113.33" width="14.56" height="14.57" fill="#0c160f"/><rect x="382.22" y="113.33" width="14.56" height="14.57" fill="#224a2e"/><rect x="396.38" y="113.33" width="14.56" height="14.57" fill="#2e5a38"/><rect x="410.53" y="113.33" width="14.56" height="14.57" fill="#2e5836"/><rect x="424.69" y="113.33" width="14.56" height="14.57" fill="#284a2c"/><rect x="438.84" y="113.33" width="14.56" height="14.57" fill="#2a3428"/><rect x="0.00" y="127.50" width="14.56" height="14.57" fill="#1c3628"/><rect x="14.16" y="127.50" width="14.56" height="14.57" fill="#0d1912"/><rect x="28.31" y="127.50" width="14.56" height="14.57" fill="#0d1912"/><rect x="42.47" y="127.50" width="14.56" height="14.57" fill="#0d1912"/><rect x="56.62" y="127.50" width="14.56" height="14.57" fill="#0d1912"/><rect x="70.78" y="127.50" width="14.56" height="14.57" fill="#0d1912"/><rect x="84.94" y="127.50" width="14.56" height="14.57" fill="#0d1912"/><rect x="99.09" y="127.50" width="14.56" height="14.57" fill="#0d1912"/><rect x="113.25" y="127.50" width="14.56" height="14.57" fill="#0d1912"/><rect x="127.41" y="127.50" width="14.56" height="14.57" fill="#0d1912"/><rect x="141.56" y="127.50" width="14.56" height="14.57" fill="#0d1912"/><rect x="155.72" y="127.50" width="14.56" height="14.57" fill="#0d1912"/><rect x="169.88" y="127.50" width="14.56" height="14.57" fill="#0d1912"/><rect x="184.03" y="127.50" width="14.56" height="14.57" fill="#0d1912"/><rect x="198.19" y="127.50" width="14.56" height="14.57" fill="#0d1912"/><rect x="212.34" y="127.50" width="14.56" height="14.57" fill="#0d1912"/><rect x="226.50" y="127.50" width="14.56" height="14.57" fill="#0d1912"/><rect x="240.66" y="127.50" width="14.56" height="14.57" fill="#0d1912"/><rect x="254.81" y="127.50" width="14.56" height="14.57" fill="#0d1912"/><rect x="268.97" y="127.50" width="14.56" height="14.57" fill="#0c1610"/><rect x="283.12" y="127.50" width="14.56" height="14.57" fill="#0c1610"/><rect x="297.28" y="127.50" width="14.56" height="14.57" fill="#0b140e"/><rect x="311.44" y="127.50" width="14.56" height="14.57" fill="#090f0b"/><rect x="325.59" y="127.50" width="14.56" height="14.57" fill="#224028"/><rect x="339.75" y="127.50" width="14.56" height="14.57" fill="#2e5a38"/><rect x="353.91" y="127.50" width="14.56" height="14.57" fill="#0c160f"/><rect x="368.06" y="127.50" width="14.56" height="14.57" fill="#0c160f"/><rect x="382.22" y="127.50" width="14.56" height="14.57" fill="#224a2e"/><rect x="396.38" y="127.50" width="14.56" height="14.57" fill="#2e5a38"/><rect x="410.53" y="127.50" width="14.56" height="14.57" fill="#2e5a38"/><rect x="424.69" y="127.50" width="14.56" height="14.57" fill="#2e5a38"/><rect x="438.84" y="127.50" width="14.56" height="14.57" fill="#274428"/><rect x="0.00" y="141.67" width="14.56" height="14.57" fill="#2a5a42"/><rect x="14.16" y="141.67" width="14.56" height="14.57" fill="#0d1912"/><rect x="28.31" y="141.67" width="14.56" height="14.57" fill="#0d1912"/><rect x="42.47" y="141.67" width="14.56" height="14.57" fill="#0d1912"/><rect x="56.62" y="141.67" width="14.56" height="14.57" fill="#0d1912"/><rect x="70.78" y="141.67" width="14.56" height="14.57" fill="#0d1912"/><rect x="84.94" y="141.67" width="14.56" height="14.57" fill="#0d1912"/><rect x="99.09" y="141.67" width="14.56" height="14.57" fill="#0d1912"/><rect x="113.25" y="141.67" width="14.56" height="14.57" fill="#0d1912"/><rect x="127.41" y="141.67" width="14.56" height="14.57" fill="#0d1912"/><rect x="141.56" y="141.67" width="14.56" height="14.57" fill="#0d1912"/><rect x="155.72" y="141.67" width="14.56" height="14.57" fill="#0d1912"/><rect x="169.88" y="141.67" width="14.56" height="14.57" fill="#0d1912"/><rect x="184.03" y="141.67" width="14.56" height="14.57" fill="#0d1912"/><rect x="198.19" y="141.67" width="14.56" height="14.57" fill="#0d1912"/><rect x="212.34" y="141.67" width="14.56" height="14.57" fill="#0d1912"/><rect x="226.50" y="141.67" width="14.56" height="14.57" fill="#0d1912"/><rect x="240.66" y="141.67" width="14.56" height="14.57" fill="#0d1912"/><rect x="254.81" y="141.67" width="14.56" height="14.57" fill="#0d1912"/><rect x="268.97" y="141.67" width="14.56" height="14.57" fill="#0c1610"/><rect x="283.12" y="141.67" width="14.56" height="14.57" fill="#0c1610"/><rect x="297.28" y="141.67" width="14.56" height="14.57" fill="#0b140e"/><rect x="311.44" y="141.67" width="14.56" height="14.57" fill="#090f0b"/><rect x="325.59" y="141.67" width="14.56" height="14.57" fill="#1c3222"/><rect x="339.75" y="141.67" width="14.56" height="14.57" fill="#2e5a3a"/><rect x="353.91" y="141.67" width="14.56" height="14.57" fill="#080d0a"/><rect x="368.06" y="141.67" width="14.56" height="14.57" fill="#0c160f"/><rect x="382.22" y="141.67" width="14.56" height="14.57" fill="#264e30"/><rect x="396.38" y="141.67" width="14.56" height="14.57" fill="#2c5634"/><rect x="410.53" y="141.67" width="14.56" height="14.57" fill="#2c5634"/><rect x="424.69" y="141.67" width="14.56" height="14.57" fill="#2c5634"/><rect x="438.84" y="141.67" width="14.56" height="14.57" fill="#2c5634"/><rect x="0.00" y="155.83" width="14.56" height="14.57" fill="#367058"/><rect x="14.16" y="155.83" width="14.56" height="14.57" fill="#0d1912"/><rect x="28.31" y="155.83" width="14.56" height="14.57" fill="#0d1912"/><rect x="42.47" y="155.83" width="14.56" height="14.57" fill="#0d1912"/><rect x="56.62" y="155.83" width="14.56" height="14.57" fill="#0d1912"/><rect x="70.78" y="155.83" width="14.56" height="14.57" fill="#0d1912"/><rect x="84.94" y="155.83" width="14.56" height="14.57" fill="#0d1912"/><rect x="99.09" y="155.83" width="14.56" height="14.57" fill="#0d1912"/><rect x="113.25" y="155.83" width="14.56" height="14.57" fill="#0d1912"/><rect x="127.41" y="155.83" width="14.56" height="14.57" fill="#0d1912"/><rect x="141.56" y="155.83" width="14.56" height="14.57" fill="#0d1912"/><rect x="155.72" y="155.83" width="14.56" height="14.57" fill="#0d1912"/><rect x="169.88" y="155.83" width="14.56" height="14.57" fill="#0d1912"/><rect x="184.03" y="155.83" width="14.56" height="14.57" fill="#0d1912"/><rect x="198.19" y="155.83" width="14.56" height="14.57" fill="#0d1912"/><rect x="212.34" y="155.83" width="14.56" height="14.57" fill="#0d1912"/><rect x="226.50" y="155.83" width="14.56" height="14.57" fill="#0d1912"/><rect x="240.66" y="155.83" width="14.56" height="14.57" fill="#0d1912"/><rect x="254.81" y="155.83" width="14.56" height="14.57" fill="#0d1912"/><rect x="268.97" y="155.83" width="14.56" height="14.57" fill="#0c1610"/><rect x="283.12" y="155.83" width="14.56" height="14.57" fill="#0c1610"/><rect x="297.28" y="155.83" width="14.56" height="14.57" fill="#0b140e"/><rect x="311.44" y="155.83" width="14.56" height="14.57" fill="#090f0b"/><rect x="325.59" y="155.83" width="14.56" height="14.57" fill="#1a3020"/><rect x="339.75" y="155.83" width="14.56" height="14.57" fill="#15281a"/><rect x="353.91" y="155.83" width="14.56" height="14.57" fill="#080d0a"/><rect x="368.06" y="155.83" width="14.56" height="14.57" fill="#0c160f"/><rect x="382.22" y="155.83" width="14.56" height="14.57" fill="#264e30"/><rect x="396.38" y="155.83" width="14.56" height="14.57" fill="#2c5634"/><rect x="410.53" y="155.83" width="14.56" height="14.57" fill="#2c5634"/><rect x="424.69" y="155.83" width="14.56" height="14.57" fill="#2c5634"/><rect x="438.84" y="155.83" width="14.56" height="14.57" fill="#2c5634"/><rect x="0.00" y="170.00" width="14.56" height="14.57" fill="#4fa078"/><rect x="14.16" y="170.00" width="14.56" height="14.57" fill="#0d1912"/><rect x="28.31" y="170.00" width="14.56" height="14.57" fill="#0d1912"/><rect x="42.47" y="170.00" width="14.56" height="14.57" fill="#0d1912"/><rect x="56.62" y="170.00" width="14.56" height="14.57" fill="#0d1912"/><rect x="70.78" y="170.00" width="14.56" height="14.57" fill="#0d1912"/><rect x="84.94" y="170.00" width="14.56" height="14.57" fill="#0d1912"/><rect x="99.09" y="170.00" width="14.56" height="14.57" fill="#0d1912"/><rect x="113.25" y="170.00" width="14.56" height="14.57" fill="#0d1912"/><rect x="127.41" y="170.00" width="14.56" height="14.57" fill="#0d1912"/><rect x="141.56" y="170.00" width="14.56" height="14.57" fill="#0d1912"/><rect x="155.72" y="170.00" width="14.56" height="14.57" fill="#0d1912"/><rect x="169.88" y="170.00" width="14.56" height="14.57" fill="#0d1912"/><rect x="184.03" y="170.00" width="14.56" height="14.57" fill="#0d1912"/><rect x="198.19" y="170.00" width="14.56" height="14.57" fill="#0d1912"/><rect x="212.34" y="170.00" width="14.56" height="14.57" fill="#0d1912"/><rect x="226.50" y="170.00" width="14.56" height="14.57" fill="#0d1912"/><rect x="240.66" y="170.00" width="14.56" height="14.57" fill="#0d1912"/><rect x="254.81" y="170.00" width="14.56" height="14.57" fill="#0d1912"/><rect x="268.97" y="170.00" width="14.56" height="14.57" fill="#0c1610"/><rect x="283.12" y="170.00" width="14.56" height="14.57" fill="#0c1610"/><rect x="297.28" y="170.00" width="14.56" height="14.57" fill="#0b140e"/><rect x="311.44" y="170.00" width="14.56" height="14.57" fill="#0b140e"/><rect x="325.59" y="170.00" width="14.56" height="14.57" fill="#162b1e"/><rect x="339.75" y="170.00" width="14.56" height="14.57" fill="#14261a"/><rect x="353.91" y="170.00" width="14.56" height="14.57" fill="#050907"/><rect x="368.06" y="170.00" width="14.56" height="14.57" fill="#0e1a12"/><rect x="382.22" y="170.00" width="14.56" height="14.57" fill="#52a065"/><rect x="396.38" y="170.00" width="14.56" height="14.57" fill="#58a86a"/><rect x="410.53" y="170.00" width="14.56" height="14.57" fill="#52a062"/><rect x="424.69" y="170.00" width="14.56" height="14.57" fill="#52985c"/><rect x="438.84" y="170.00" width="14.56" height="14.57" fill="#4a8e58"/><rect x="0.00" y="184.17" width="14.56" height="14.57" fill="#3a6e52"/><rect x="14.16" y="184.17" width="14.56" height="14.57" fill="#0d1912"/><rect x="28.31" y="184.17" width="14.56" height="14.57" fill="#0d1912"/><rect x="42.47" y="184.17" width="14.56" height="14.57" fill="#0d1912"/><rect x="56.62" y="184.17" width="14.56" height="14.57" fill="#0d1912"/><rect x="70.78" y="184.17" width="14.56" height="14.57" fill="#0d1912"/><rect x="84.94" y="184.17" width="14.56" height="14.57" fill="#0d1912"/><rect x="99.09" y="184.17" width="14.56" height="14.57" fill="#0d1912"/><rect x="113.25" y="184.17" width="14.56" height="14.57" fill="#0d1912"/><rect x="127.41" y="184.17" width="14.56" height="14.57" fill="#0d1912"/><rect x="141.56" y="184.17" width="14.56" height="14.57" fill="#0d1912"/><rect x="155.72" y="184.17" width="14.56" height="14.57" fill="#0d1912"/><rect x="169.88" y="184.17" width="14.56" height="14.57" fill="#0d1912"/><rect x="184.03" y="184.17" width="14.56" height="14.57" fill="#0d1912"/><rect x="198.19" y="184.17" width="14.56" height="14.57" fill="#0d1912"/><rect x="212.34" y="184.17" width="14.56" height="14.57" fill="#0d1912"/><rect x="226.50" y="184.17" width="14.56" height="14.57" fill="#0d1912"/><rect x="240.66" y="184.17" width="14.56" height="14.57" fill="#0d1912"/><rect x="254.81" y="184.17" width="14.56" height="14.57" fill="#0d1912"/><rect x="268.97" y="184.17" width="14.56" height="14.57" fill="#0c1610"/><rect x="283.12" y="184.17" width="14.56" height="14.57" fill="#0c1610"/><rect x="297.28" y="184.17" width="14.56" height="14.57" fill="#0b140e"/><rect x="311.44" y="184.17" width="14.56" height="14.57" fill="#0b140e"/><rect x="325.59" y="184.17" width="14.56" height="14.57" fill="#121e16"/><rect x="339.75" y="184.17" width="14.56" height="14.57" fill="#172c1e"/><rect x="353.91" y="184.17" width="14.56" height="14.57" fill="#050907"/><rect x="368.06" y="184.17" width="14.56" height="14.57" fill="#0e1a12"/><rect x="382.22" y="184.17" width="14.56" height="14.57" fill="#52a065"/><rect x="396.38" y="184.17" width="14.56" height="14.57" fill="#58ac6a"/><rect x="410.53" y="184.17" width="14.56" height="14.57" fill="#5cb470"/><rect x="424.69" y="184.17" width="14.56" height="14.57" fill="#5cb470"/><rect x="438.84" y="184.17" width="14.56" height="14.57" fill="#5aae6a"/><rect x="0.00" y="198.33" width="14.56" height="14.57" fill="#26503a"/><rect x="14.16" y="198.33" width="14.56" height="14.57" fill="#0d1912"/><rect x="28.31" y="198.33" width="14.56" height="14.57" fill="#0d1912"/><rect x="42.47" y="198.33" width="14.56" height="14.57" fill="#0d1912"/><rect x="56.62" y="198.33" width="14.56" height="14.57" fill="#0d1912"/><rect x="70.78" y="198.33" width="14.56" height="14.57" fill="#0d1912"/><rect x="84.94" y="198.33" width="14.56" height="14.57" fill="#0d1912"/><rect x="99.09" y="198.33" width="14.56" height="14.57" fill="#0d1912"/><rect x="113.25" y="198.33" width="14.56" height="14.57" fill="#0d1912"/><rect x="127.41" y="198.33" width="14.56" height="14.57" fill="#0d1912"/><rect x="141.56" y="198.33" width="14.56" height="14.57" fill="#0d1912"/><rect x="155.72" y="198.33" width="14.56" height="14.57" fill="#0d1912"/><rect x="169.88" y="198.33" width="14.56" height="14.57" fill="#0d1912"/><rect x="184.03" y="198.33" width="14.56" height="14.57" fill="#0d1912"/><rect x="198.19" y="198.33" width="14.56" height="14.57" fill="#0d1912"/><rect x="212.34" y="198.33" width="14.56" height="14.57" fill="#0d1912"/><rect x="226.50" y="198.33" width="14.56" height="14.57" fill="#0d1912"/><rect x="240.66" y="198.33" width="14.56" height="14.57" fill="#0d1912"/><rect x="254.81" y="198.33" width="14.56" height="14.57" fill="#0d1912"/><rect x="268.97" y="198.33" width="14.56" height="14.57" fill="#0c1610"/><rect x="283.12" y="198.33" width="14.56" height="14.57" fill="#0b140e"/><rect x="297.28" y="198.33" width="14.56" height="14.57" fill="#090f0b"/><rect x="311.44" y="198.33" width="14.56" height="14.57" fill="#0b140e"/><rect x="325.59" y="198.33" width="14.56" height="14.57" fill="#152a1c"/><rect x="339.75" y="198.33" width="14.56" height="14.57" fill="#152a1c"/><rect x="353.91" y="198.33" width="14.56" height="14.57" fill="#050907"/><rect x="368.06" y="198.33" width="14.56" height="14.57" fill="#122216"/><rect x="382.22" y="198.33" width="14.56" height="14.57" fill="#52a065"/><rect x="396.38" y="198.33" width="14.56" height="14.57" fill="#62ba72"/><rect x="410.53" y="198.33" width="14.56" height="14.57" fill="#66c67a"/><rect x="424.69" y="198.33" width="14.56" height="14.57" fill="#66c67a"/><rect x="438.84" y="198.33" width="14.56" height="14.57" fill="#5cb470"/><rect x="0.00" y="212.50" width="14.56" height="14.57" fill="#234a38"/><rect x="14.16" y="212.50" width="14.56" height="14.57" fill="#1e3c2e"/><rect x="28.31" y="212.50" width="14.56" height="14.57" fill="#0d1912"/><rect x="42.47" y="212.50" width="14.56" height="14.57" fill="#0d1912"/><rect x="56.62" y="212.50" width="14.56" height="14.57" fill="#0d1912"/><rect x="70.78" y="212.50" width="14.56" height="14.57" fill="#0d1912"/><rect x="84.94" y="212.50" width="14.56" height="14.57" fill="#0d1912"/><rect x="99.09" y="212.50" width="14.56" height="14.57" fill="#0d1912"/><rect x="113.25" y="212.50" width="14.56" height="14.57" fill="#0d1912"/><rect x="127.41" y="212.50" width="14.56" height="14.57" fill="#0d1912"/><rect x="141.56" y="212.50" width="14.56" height="14.57" fill="#0d1912"/><rect x="155.72" y="212.50" width="14.56" height="14.57" fill="#0d1912"/><rect x="169.88" y="212.50" width="14.56" height="14.57" fill="#0d1912"/><rect x="184.03" y="212.50" width="14.56" height="14.57" fill="#0d1912"/><rect x="198.19" y="212.50" width="14.56" height="14.57" fill="#0d1912"/><rect x="212.34" y="212.50" width="14.56" height="14.57" fill="#0d1912"/><rect x="226.50" y="212.50" width="14.56" height="14.57" fill="#0d1912"/><rect x="240.66" y="212.50" width="14.56" height="14.57" fill="#0b150f"/><rect x="254.81" y="212.50" width="14.56" height="14.57" fill="#0a130d"/><rect x="268.97" y="212.50" width="14.56" height="14.57" fill="#0b140e"/><rect x="283.12" y="212.50" width="14.56" height="14.57" fill="#090f0b"/><rect x="297.28" y="212.50" width="14.56" height="14.57" fill="#050907"/><rect x="311.44" y="212.50" width="14.56" height="14.57" fill="#0e1a12"/><rect x="325.59" y="212.50" width="14.56" height="14.57" fill="#1c3624"/><rect x="339.75" y="212.50" width="14.56" height="14.57" fill="#0e1a12"/><rect x="353.91" y="212.50" width="14.56" height="14.57" fill="#050907"/><rect x="368.06" y="212.50" width="14.56" height="14.57" fill="#122216"/><rect x="382.22" y="212.50" width="14.56" height="14.57" fill="#3e7a52"/><rect x="396.38" y="212.50" width="14.56" height="14.57" fill="#4a9464"/><rect x="410.53" y="212.50" width="14.56" height="14.57" fill="#5aae72"/><rect x="424.69" y="212.50" width="14.56" height="14.57" fill="#56a46a"/><rect x="438.84" y="212.50" width="14.56" height="14.57" fill="#5cb470"/><rect x="0.00" y="226.67" width="14.56" height="14.57" fill="#162e22"/><rect x="14.16" y="226.67" width="14.56" height="14.57" fill="#1e3c2e"/><rect x="28.31" y="226.67" width="14.56" height="14.57" fill="#0d1912"/><rect x="42.47" y="226.67" width="14.56" height="14.57" fill="#0d1912"/><rect x="56.62" y="226.67" width="14.56" height="14.57" fill="#0d1912"/><rect x="70.78" y="226.67" width="14.56" height="14.57" fill="#0d1912"/><rect x="84.94" y="226.67" width="14.56" height="14.57" fill="#0d1912"/><rect x="99.09" y="226.67" width="14.56" height="14.57" fill="#0d1912"/><rect x="113.25" y="226.67" width="14.56" height="14.57" fill="#0d1912"/><rect x="127.41" y="226.67" width="14.56" height="14.57" fill="#0d1912"/><rect x="141.56" y="226.67" width="14.56" height="14.57" fill="#0d1912"/><rect x="155.72" y="226.67" width="14.56" height="14.57" fill="#0d1912"/><rect x="169.88" y="226.67" width="14.56" height="14.57" fill="#0d1912"/><rect x="184.03" y="226.67" width="14.56" height="14.57" fill="#0d1912"/><rect x="198.19" y="226.67" width="14.56" height="14.57" fill="#0d1912"/><rect x="212.34" y="226.67" width="14.56" height="14.57" fill="#0d1912"/><rect x="226.50" y="226.67" width="14.56" height="14.57" fill="#0d1912"/><rect x="240.66" y="226.67" width="14.56" height="14.57" fill="#09120c"/><rect x="254.81" y="226.67" width="14.56" height="14.57" fill="#060c08"/><rect x="268.97" y="226.67" width="14.56" height="14.57" fill="#080d0a"/><rect x="283.12" y="226.67" width="14.56" height="14.57" fill="#080d0a"/><rect x="297.28" y="226.67" width="14.56" height="14.57" fill="#050907"/><rect x="311.44" y="226.67" width="14.56" height="14.57" fill="#101810"/><rect x="325.59" y="226.67" width="14.56" height="14.57" fill="#4a8a56"/><rect x="339.75" y="226.67" width="14.56" height="14.57" fill="#224430"/><rect x="353.91" y="226.67" width="14.56" height="14.57" fill="#050907"/><rect x="368.06" y="226.67" width="14.56" height="14.57" fill="#1e3824"/><rect x="382.22" y="226.67" width="14.56" height="14.57" fill="#3e7a52"/><rect x="396.38" y="226.67" width="14.56" height="14.57" fill="#3e6e4a"/><rect x="410.53" y="226.67" width="14.56" height="14.57" fill="#3c7050"/><rect x="424.69" y="226.67" width="14.56" height="14.57" fill="#3e7a52"/><rect x="438.84" y="226.67" width="14.56" height="14.57" fill="#52a065"/><rect x="0.00" y="240.83" width="14.56" height="14.57" fill="#0a120d"/><rect x="14.16" y="240.83" width="14.56" height="14.57" fill="#12201a"/><rect x="28.31" y="240.83" width="14.56" height="14.57" fill="#12221a"/><rect x="42.47" y="240.83" width="14.56" height="14.57" fill="#111e17"/><rect x="56.62" y="240.83" width="14.56" height="14.57" fill="#13241b"/><rect x="70.78" y="240.83" width="14.56" height="14.57" fill="#0f1c15"/><rect x="84.94" y="240.83" width="14.56" height="14.57" fill="#0d1912"/><rect x="99.09" y="240.83" width="14.56" height="14.57" fill="#0d1912"/><rect x="113.25" y="240.83" width="14.56" height="14.57" fill="#0c1711"/><rect x="127.41" y="240.83" width="14.56" height="14.57" fill="#0c1711"/><rect x="141.56" y="240.83" width="14.56" height="14.57" fill="#0c1711"/><rect x="155.72" y="240.83" width="14.56" height="14.57" fill="#0c1711"/><rect x="169.88" y="240.83" width="14.56" height="14.57" fill="#0c1711"/><rect x="184.03" y="240.83" width="14.56" height="14.57" fill="#0c1711"/><rect x="198.19" y="240.83" width="14.56" height="14.57" fill="#0c1711"/><rect x="212.34" y="240.83" width="14.56" height="14.57" fill="#0c1711"/><rect x="226.50" y="240.83" width="14.56" height="14.57" fill="#0c1711"/><rect x="240.66" y="240.83" width="14.56" height="14.57" fill="#09120c"/><rect x="254.81" y="240.83" width="14.56" height="14.57" fill="#060c08"/><rect x="268.97" y="240.83" width="14.56" height="14.57" fill="#080d0a"/><rect x="283.12" y="240.83" width="14.56" height="14.57" fill="#050907"/><rect x="297.28" y="240.83" width="14.56" height="14.57" fill="#050907"/><rect x="311.44" y="240.83" width="14.56" height="14.57" fill="#0e1a12"/><rect x="325.59" y="240.83" width="14.56" height="14.57" fill="#5aa86a"/><rect x="339.75" y="240.83" width="14.56" height="14.57" fill="#264e32"/><rect x="353.91" y="240.83" width="14.56" height="14.57" fill="#050907"/><rect x="368.06" y="240.83" width="14.56" height="14.57" fill="#2e5c3e"/><rect x="382.22" y="240.83" width="14.56" height="14.57" fill="#6ecc86"/><rect x="396.38" y="240.83" width="14.56" height="14.57" fill="#76d690"/><rect x="410.53" y="240.83" width="14.56" height="14.57" fill="#70d08a"/><rect x="424.69" y="240.83" width="14.56" height="14.57" fill="#6ecc86"/><rect x="438.84" y="240.83" width="14.56" height="14.57" fill="#70d08a"/><rect x="0.00" y="255.00" width="14.56" height="14.57" fill="#0a120d"/><rect x="14.16" y="255.00" width="14.56" height="14.57" fill="#0a120d"/><rect x="28.31" y="255.00" width="14.56" height="14.57" fill="#13241b"/><rect x="42.47" y="255.00" width="14.56" height="14.57" fill="#0f1c15"/><rect x="56.62" y="255.00" width="14.56" height="14.57" fill="#142a1e"/><rect x="70.78" y="255.00" width="14.56" height="14.57" fill="#0d1912"/><rect x="84.94" y="255.00" width="14.56" height="14.57" fill="#0d1912"/><rect x="99.09" y="255.00" width="14.56" height="14.57" fill="#0d1912"/><rect x="113.25" y="255.00" width="14.56" height="14.57" fill="#0c1711"/><rect x="127.41" y="255.00" width="14.56" height="14.57" fill="#0c1711"/><rect x="141.56" y="255.00" width="14.56" height="14.57" fill="#0c1711"/><rect x="155.72" y="255.00" width="14.56" height="14.57" fill="#0c1711"/><rect x="169.88" y="255.00" width="14.56" height="14.57" fill="#0c1711"/><rect x="184.03" y="255.00" width="14.56" height="14.57" fill="#0c1711"/><rect x="198.19" y="255.00" width="14.56" height="14.57" fill="#0c1711"/><rect x="212.34" y="255.00" width="14.56" height="14.57" fill="#0c1711"/><rect x="226.50" y="255.00" width="14.56" height="14.57" fill="#0c1711"/><rect x="240.66" y="255.00" width="14.56" height="14.57" fill="#09120c"/><rect x="254.81" y="255.00" width="14.56" height="14.57" fill="#060c08"/><rect x="268.97" y="255.00" width="14.56" height="14.57" fill="#050907"/><rect x="283.12" y="255.00" width="14.56" height="14.57" fill="#050907"/><rect x="297.28" y="255.00" width="14.56" height="14.57" fill="#050907"/><rect x="311.44" y="255.00" width="14.56" height="14.57" fill="#0e1610"/><rect x="325.59" y="255.00" width="14.56" height="14.57" fill="#5aac6c"/><rect x="339.75" y="255.00" width="14.56" height="14.57" fill="#224430"/><rect x="353.91" y="255.00" width="14.56" height="14.57" fill="#050907"/><rect x="368.06" y="255.00" width="14.56" height="14.57" fill="#3e7a4e"/><rect x="382.22" y="255.00" width="14.56" height="14.57" fill="#66c07a"/><rect x="396.38" y="255.00" width="14.56" height="14.57" fill="#66bc78"/><rect x="410.53" y="255.00" width="14.56" height="14.57" fill="#66bc78"/><rect x="424.69" y="255.00" width="14.56" height="14.57" fill="#68c07c"/><rect x="438.84" y="255.00" width="14.56" height="14.57" fill="#62b474"/><rect x="0.00" y="269.17" width="14.56" height="14.57" fill="#0a120d"/><rect x="14.16" y="269.17" width="14.56" height="14.57" fill="#0a120d"/><rect x="28.31" y="269.17" width="14.56" height="14.57" fill="#13241b"/><rect x="42.47" y="269.17" width="14.56" height="14.57" fill="#0d1912"/><rect x="56.62" y="269.17" width="14.56" height="14.57" fill="#142a1e"/><rect x="70.78" y="269.17" width="14.56" height="14.57" fill="#15281e"/><rect x="84.94" y="269.17" width="14.56" height="14.57" fill="#0d1912"/><rect x="99.09" y="269.17" width="14.56" height="14.57" fill="#0d1912"/><rect x="113.25" y="269.17" width="14.56" height="14.57" fill="#0c1711"/><rect x="127.41" y="269.17" width="14.56" height="14.57" fill="#0c1711"/><rect x="141.56" y="269.17" width="14.56" height="14.57" fill="#0c1711"/><rect x="155.72" y="269.17" width="14.56" height="14.57" fill="#0c1711"/><rect x="169.88" y="269.17" width="14.56" height="14.57" fill="#0c1711"/><rect x="184.03" y="269.17" width="14.56" height="14.57" fill="#0c1711"/><rect x="198.19" y="269.17" width="14.56" height="14.57" fill="#0c1711"/><rect x="212.34" y="269.17" width="14.56" height="14.57" fill="#0c1711"/><rect x="226.50" y="269.17" width="14.56" height="14.57" fill="#0c1711"/><rect x="240.66" y="269.17" width="14.56" height="14.57" fill="#09120c"/><rect x="254.81" y="269.17" width="14.56" height="14.57" fill="#060c08"/><rect x="268.97" y="269.17" width="14.56" height="14.57" fill="#050907"/><rect x="283.12" y="269.17" width="14.56" height="14.57" fill="#050907"/><rect x="297.28" y="269.17" width="14.56" height="14.57" fill="#050907"/><rect x="311.44" y="269.17" width="14.56" height="14.57" fill="#0e1610"/><rect x="325.59" y="269.17" width="14.56" height="14.57" fill="#5aac6c"/><rect x="339.75" y="269.17" width="14.56" height="14.57" fill="#182e20"/><rect x="353.91" y="269.17" width="14.56" height="14.57" fill="#050907"/><rect x="368.06" y="269.17" width="14.56" height="14.57" fill="#3e7a4e"/><rect x="382.22" y="269.17" width="14.56" height="14.57" fill="#56a46a"/><rect x="396.38" y="269.17" width="14.56" height="14.57" fill="#56a46a"/><rect x="410.53" y="269.17" width="14.56" height="14.57" fill="#56a46a"/><rect x="424.69" y="269.17" width="14.56" height="14.57" fill="#56a470"/><rect x="438.84" y="269.17" width="14.56" height="14.57" fill="#56a46a"/><rect x="0.00" y="283.33" width="14.56" height="14.57" fill="#0a120d"/><rect x="14.16" y="283.33" width="14.56" height="14.57" fill="#0a120d"/><rect x="28.31" y="283.33" width="14.56" height="14.57" fill="#10201a"/><rect x="42.47" y="283.33" width="14.56" height="14.57" fill="#10201a"/><rect x="56.62" y="283.33" width="14.56" height="14.57" fill="#142a1e"/><rect x="70.78" y="283.33" width="14.56" height="14.57" fill="#172f22"/><rect x="84.94" y="283.33" width="14.56" height="14.57" fill="#121e16"/><rect x="99.09" y="283.33" width="14.56" height="14.57" fill="#0d1912"/><rect x="113.25" y="283.33" width="14.56" height="14.57" fill="#0c1711"/><rect x="127.41" y="283.33" width="14.56" height="14.57" fill="#0c1711"/><rect x="141.56" y="283.33" width="14.56" height="14.57" fill="#0c1711"/><rect x="155.72" y="283.33" width="14.56" height="14.57" fill="#0c1711"/><rect x="169.88" y="283.33" width="14.56" height="14.57" fill="#0c1711"/><rect x="184.03" y="283.33" width="14.56" height="14.57" fill="#0c1711"/><rect x="198.19" y="283.33" width="14.56" height="14.57" fill="#0c1711"/><rect x="212.34" y="283.33" width="14.56" height="14.57" fill="#0c1711"/><rect x="226.50" y="283.33" width="14.56" height="14.57" fill="#0c1711"/><rect x="240.66" y="283.33" width="14.56" height="14.57" fill="#09120c"/><rect x="254.81" y="283.33" width="14.56" height="14.57" fill="#060c08"/><rect x="268.97" y="283.33" width="14.56" height="14.57" fill="#050907"/><rect x="283.12" y="283.33" width="14.56" height="14.57" fill="#050907"/><rect x="297.28" y="283.33" width="14.56" height="14.57" fill="#050907"/><rect x="311.44" y="283.33" width="14.56" height="14.57" fill="#0e1610"/><rect x="325.59" y="283.33" width="14.56" height="14.57" fill="#56a468"/><rect x="339.75" y="283.33" width="14.56" height="14.57" fill="#0c120e"/><rect x="353.91" y="283.33" width="14.56" height="14.57" fill="#050907"/><rect x="368.06" y="283.33" width="14.56" height="14.57" fill="#4ea46c"/><rect x="382.22" y="283.33" width="14.56" height="14.57" fill="#58b47a"/><rect x="396.38" y="283.33" width="14.56" height="14.57" fill="#56b47a"/><rect x="410.53" y="283.33" width="14.56" height="14.57" fill="#56b47a"/><rect x="424.69" y="283.33" width="14.56" height="14.57" fill="#52a874"/><rect x="438.84" y="283.33" width="14.56" height="14.57" fill="#52aa74"/><rect x="0.00" y="297.50" width="14.56" height="14.57" fill="#0a120d"/><rect x="14.16" y="297.50" width="14.56" height="14.57" fill="#0a120d"/><rect x="28.31" y="297.50" width="14.56" height="14.57" fill="#0d1912"/><rect x="42.47" y="297.50" width="14.56" height="14.57" fill="#0e1a14"/><rect x="56.62" y="297.50" width="14.56" height="14.57" fill="#111e17"/><rect x="70.78" y="297.50" width="14.56" height="14.57" fill="#183222"/><rect x="84.94" y="297.50" width="14.56" height="14.57" fill="#13241a"/><rect x="99.09" y="297.50" width="14.56" height="14.57" fill="#0d1912"/><rect x="113.25" y="297.50" width="14.56" height="14.57" fill="#0c1711"/><rect x="127.41" y="297.50" width="14.56" height="14.57" fill="#0c1711"/><rect x="141.56" y="297.50" width="14.56" height="14.57" fill="#0c1711"/><rect x="155.72" y="297.50" width="14.56" height="14.57" fill="#0c1711"/><rect x="169.88" y="297.50" width="14.56" height="14.57" fill="#0c1711"/><rect x="184.03" y="297.50" width="14.56" height="14.57" fill="#0c1711"/><rect x="198.19" y="297.50" width="14.56" height="14.57" fill="#0c1711"/><rect x="212.34" y="297.50" width="14.56" height="14.57" fill="#0c1711"/><rect x="226.50" y="297.50" width="14.56" height="14.57" fill="#0c1711"/><rect x="240.66" y="297.50" width="14.56" height="14.57" fill="#09120c"/><rect x="254.81" y="297.50" width="14.56" height="14.57" fill="#060c08"/><rect x="268.97" y="297.50" width="14.56" height="14.57" fill="#050907"/><rect x="283.12" y="297.50" width="14.56" height="14.57" fill="#030604"/><rect x="297.28" y="297.50" width="14.56" height="14.57" fill="#050907"/><rect x="311.44" y="297.50" width="14.56" height="14.57" fill="#0e1610"/><rect x="325.59" y="297.50" width="14.56" height="14.57" fill="#4a8a5a"/><rect x="339.75" y="297.50" width="14.56" height="14.57" fill="#050907"/><rect x="353.91" y="297.50" width="14.56" height="14.57" fill="#0e1610"/><rect x="368.06" y="297.50" width="14.56" height="14.57" fill="#4ea46c"/><rect x="382.22" y="297.50" width="14.56" height="14.57" fill="#4a9a66"/><rect x="396.38" y="297.50" width="14.56" height="14.57" fill="#3e8a52"/><rect x="410.53" y="297.50" width="14.56" height="14.57" fill="#3a8a4a"/><rect x="424.69" y="297.50" width="14.56" height="14.57" fill="#3e8a52"/><rect x="438.84" y="297.50" width="14.56" height="14.57" fill="#5ec488"/><rect x="0.00" y="311.67" width="14.56" height="14.57" fill="#0a120d"/><rect x="14.16" y="311.67" width="14.56" height="14.57" fill="#0a120d"/><rect x="28.31" y="311.67" width="14.56" height="14.57" fill="#0d1912"/><rect x="42.47" y="311.67" width="14.56" height="14.57" fill="#0d1912"/><rect x="56.62" y="311.67" width="14.56" height="14.57" fill="#0d1912"/><rect x="70.78" y="311.67" width="14.56" height="14.57" fill="#1a3424"/><rect x="84.94" y="311.67" width="14.56" height="14.57" fill="#172e20"/><rect x="99.09" y="311.67" width="14.56" height="14.57" fill="#0d1912"/><rect x="113.25" y="311.67" width="14.56" height="14.57" fill="#0c1711"/><rect x="127.41" y="311.67" width="14.56" height="14.57" fill="#0c1711"/><rect x="141.56" y="311.67" width="14.56" height="14.57" fill="#0c1711"/><rect x="155.72" y="311.67" width="14.56" height="14.57" fill="#0c1711"/><rect x="169.88" y="311.67" width="14.56" height="14.57" fill="#0c1711"/><rect x="184.03" y="311.67" width="14.56" height="14.57" fill="#0c1711"/><rect x="198.19" y="311.67" width="14.56" height="14.57" fill="#0c1711"/><rect x="212.34" y="311.67" width="14.56" height="14.57" fill="#0c1711"/><rect x="226.50" y="311.67" width="14.56" height="14.57" fill="#0c1711"/><rect x="240.66" y="311.67" width="14.56" height="14.57" fill="#09120c"/><rect x="254.81" y="311.67" width="14.56" height="14.57" fill="#15281a"/><rect x="268.97" y="311.67" width="14.56" height="14.57" fill="#030604"/><rect x="283.12" y="311.67" width="14.56" height="14.57" fill="#030604"/><rect x="297.28" y="311.67" width="14.56" height="14.57" fill="#080d0a"/><rect x="311.44" y="311.67" width="14.56" height="14.57" fill="#0e1610"/><rect x="325.59" y="311.67" width="14.56" height="14.57" fill="#36663e"/><rect x="339.75" y="311.67" width="14.56" height="14.57" fill="#050907"/><rect x="353.91" y="311.67" width="14.56" height="14.57" fill="#14261a"/><rect x="368.06" y="311.67" width="14.56" height="14.57" fill="#4a8e5c"/><rect x="382.22" y="311.67" width="14.56" height="14.57" fill="#52ac6a"/><rect x="396.38" y="311.67" width="14.56" height="14.57" fill="#3a8040"/><rect x="410.53" y="311.67" width="14.56" height="14.57" fill="#44a05a"/><rect x="424.69" y="311.67" width="14.56" height="14.57" fill="#4aa464"/><rect x="438.84" y="311.67" width="14.56" height="14.57" fill="#5abc7a"/><rect x="0.00" y="325.83" width="14.56" height="14.57" fill="#0a120d"/><rect x="14.16" y="325.83" width="14.56" height="14.57" fill="#0a120d"/><rect x="28.31" y="325.83" width="14.56" height="14.57" fill="#0d1912"/><rect x="42.47" y="325.83" width="14.56" height="14.57" fill="#0d1912"/><rect x="56.62" y="325.83" width="14.56" height="14.57" fill="#0d1912"/><rect x="70.78" y="325.83" width="14.56" height="14.57" fill="#183020"/><rect x="84.94" y="325.83" width="14.56" height="14.57" fill="#1a3424"/><rect x="99.09" y="325.83" width="14.56" height="14.57" fill="#121e16"/><rect x="113.25" y="325.83" width="14.56" height="14.57" fill="#0c1711"/><rect x="127.41" y="325.83" width="14.56" height="14.57" fill="#0c1711"/><rect x="141.56" y="325.83" width="14.56" height="14.57" fill="#0c1711"/><rect x="155.72" y="325.83" width="14.56" height="14.57" fill="#0c1711"/><rect x="169.88" y="325.83" width="14.56" height="14.57" fill="#0c1711"/><rect x="184.03" y="325.83" width="14.56" height="14.57" fill="#0c1711"/><rect x="198.19" y="325.83" width="14.56" height="14.57" fill="#0c1711"/><rect x="212.34" y="325.83" width="14.56" height="14.57" fill="#0c1711"/><rect x="226.50" y="325.83" width="14.56" height="14.57" fill="#0c1711"/><rect x="240.66" y="325.83" width="14.56" height="14.57" fill="#15281a"/><rect x="254.81" y="325.83" width="14.56" height="14.57" fill="#122216"/><rect x="268.97" y="325.83" width="14.56" height="14.57" fill="#050907"/><rect x="283.12" y="325.83" width="14.56" height="14.57" fill="#030604"/><rect x="297.28" y="325.83" width="14.56" height="14.57" fill="#080d0a"/><rect x="311.44" y="325.83" width="14.56" height="14.57" fill="#0e1610"/><rect x="325.59" y="325.83" width="14.56" height="14.57" fill="#234a2c"/><rect x="339.75" y="325.83" width="14.56" height="14.57" fill="#050907"/><rect x="353.91" y="325.83" width="14.56" height="14.57" fill="#234a2c"/><rect x="368.06" y="325.83" width="14.56" height="14.57" fill="#5ec484"/><rect x="382.22" y="325.83" width="14.56" height="14.57" fill="#5ec484"/><rect x="396.38" y="325.83" width="14.56" height="14.57" fill="#46985a"/><rect x="410.53" y="325.83" width="14.56" height="14.57" fill="#48a05e"/><rect x="424.69" y="325.83" width="14.56" height="14.57" fill="#52ac6e"/><rect x="438.84" y="325.83" width="14.56" height="14.57" fill="#4a9c5e"/></svg>
<div style="left:921.5px;top:394px;width:526.5px;height:71px;background:#fff"></div>
<div style="left:921.5px;top:394px;width:12px;height:59px;background:#000"></div>
<div style="left:933px;top:394px;width:515px;height:59px;background:linear-gradient(90deg,#0010ff 0%,#0050ff 10.4%,#00a8ff 19.4%,#00ffff 27.7%,#00ffc0 33.6%,#00ff60 42%,#40ff20 49.2%,#80ff00 57.5%,#c0ff00 64%,#ffff00 71.2%,#ffa000 84.9%,#ff5000 92%,#ff0000 100%)"></div>
<div class="lbs" style="left:923px;top:453px;font-size:12px;line-height:13px;color:#222">0 1</div>
<div class="lbs" style="left:1179px;top:453px;font-size:12px;line-height:13px;color:#222">128</div>
<div class="lbs" style="left:1426px;top:453px;font-size:12px;line-height:13px;color:#222">255</div>
<div class="grp" style="left:1386.5px;top:44px;width:174px;height:338px"></div>
<div class="lb gt" style="left:1394px;top:36px">R, G, B Gain Panel</div>
<div class="chk" style="left:1428.5px;top:59.5px;width:15px;height:15px"></div>
<div class="lb" style="left:1449px;top:60px;">Enabled</div>
<div style="left:1506.5px;top:60px;width:13px;height:13px;background:#008080"></div>
<div class="lb" style="left:1397px;top:86.5px;">R</div>
<div class="spin dis" style="left:1428.5px;top:81.0px;width:113.5px;height:25.5px;line-height:23.5px"><span>4096.000000</span><svg class="chev" width="10" height="16" style="right:7px;top:3.75px"><path d="M2 6.5 L5 3.5 L8 6.5" fill="none" stroke="#9a9a9a" stroke-width="1.3"/><path d="M2 10 L5 13 L8 10" fill="none" stroke="#9a9a9a" stroke-width="1.3"/></svg></div>
<div class="lb" style="left:1397px;top:118.2px;">G</div>
<div class="spin dis" style="left:1428.5px;top:112.7px;width:113.5px;height:25.5px;line-height:23.5px"><span>4096.000000</span><svg class="chev" width="10" height="16" style="right:7px;top:3.75px"><path d="M2 6.5 L5 3.5 L8 6.5" fill="none" stroke="#9a9a9a" stroke-width="1.3"/><path d="M2 10 L5 13 L8 10" fill="none" stroke="#9a9a9a" stroke-width="1.3"/></svg></div>
<div class="lb" style="left:1397px;top:149.9px;">B</div>
<div class="spin dis" style="left:1428.5px;top:144.4px;width:113.5px;height:25.5px;line-height:23.5px"><span>4096.000000</span><svg class="chev" width="10" height="16" style="right:7px;top:3.75px"><path d="M2 6.5 L5 3.5 L8 6.5" fill="none" stroke="#9a9a9a" stroke-width="1.3"/><path d="M2 10 L5 13 L8 10" fill="none" stroke="#9a9a9a" stroke-width="1.3"/></svg></div>
<div class="grp" style="left:1568px;top:44px;width:201px;height:338px"></div>
<div class="lb gt" style="left:1576px;top:36px">Gain Panel</div>
<div class="lb" style="left:1579px;top:63px;">X,Y</div>
<div class="tb" style="left:1610.5px;top:58px;width:71px;height:23.5px"></div>
<div class="tb" style="left:1687px;top:58px;width:71px;height:23.5px"></div>
<div class="lb" style="left:1579px;top:94px;">CT</div>
<div class="tb" style="left:1610.5px;top:89px;width:71px;height:23.5px"></div>
<div class="lb" style="left:1579px;top:124.5px;">R</div>
<div class="tb" style="left:1610.5px;top:119.5px;width:71px;height:23.5px"></div>
<div class="tb" style="left:1687px;top:119.5px;width:71px;height:23.5px"></div>
<div class="lb" style="left:1579px;top:155.5px;">G</div>
<div class="tb" style="left:1610.5px;top:150.5px;width:71px;height:23.5px"></div>
<div class="tb" style="left:1687px;top:150.5px;width:71px;height:23.5px"></div>
<div class="lb" style="left:1579px;top:186px;">B</div>
<div class="tb" style="left:1610.5px;top:181px;width:71px;height:23.5px"></div>
<div class="tb" style="left:1687px;top:181px;width:71px;height:23.5px"></div>
<div class="lb" style="left:1579px;top:218px;">CCT</div>
<div class="tb" style="left:1610.5px;top:213px;width:71px;height:23.5px"></div>
<div class="lb" style="left:1580px;top:249.5px;">tint</div>
<div class="tb" style="left:1610.5px;top:244.5px;width:71px;height:23.5px"></div>
<div class="lb" style="left:1687px;top:219px;">K</div>
<div class="chk" style="left:1610.5px;top:284px;width:15px;height:15px"></div>
<div class="lb" style="left:1631px;top:285px;">CCT Curve</div>
<div class="chk" style="left:1610.5px;top:309.5px;width:15px;height:15px"></div>
<div class="lb" style="left:1631px;top:310px;">Valid Only</div>
<div class="grp" style="left:1453px;top:393.5px;width:315.5px;height:70.5px"></div>
<div class="tb" style="left:1490px;top:400.5px;width:124.5px;height:23px"></div>
<div class="lb" style="left:1635.5px;top:406px;">Block</div>
<div class="tb" style="left:1687px;top:400.5px;width:70.5px;height:23px"></div>
<div style="left:1490px;top:437px;width:14px;height:14px;background:#ff0000"></div>
<div class="lb" style="left:1519px;top:437px;">Applied Gain</div>
<div class="lb" style="left:1635.5px;top:437px;">Weight</div>
<div class="tb" style="left:1687px;top:431px;width:70.5px;height:24px"></div>
<div style="left:921.5px;top:477.5px;width:848px;height:647px;background:#fff"></div>
<svg style="left:921.5px;top:477.5px" width="848" height="647"><line x1="282.40" y1="70.20" x2="282.40" y2="602.50" stroke="#14d4e6" stroke-width="1.3" stroke-dasharray="3.5 2"/><line x1="507.10" y1="70.20" x2="507.10" y2="602.50" stroke="#14d4e6" stroke-width="1.3" stroke-dasharray="3.5 2"/><line x1="63.00" y1="264.30" x2="839.50" y2="264.30" stroke="#14d4e6" stroke-width="1.3" stroke-dasharray="3.5 2"/><line x1="63.00" y1="525.10" x2="839.50" y2="525.10" stroke="#14d4e6" stroke-width="1.3" stroke-dasharray="3.5 2"/><rect x="467.30" y="246.10" width="3.2" height="3.2" fill="#87cefa"/><rect x="476.00" y="243.00" width="3.2" height="3.2" fill="#87cefa"/><rect x="446.10" y="266.50" width="3.2" height="3.2" fill="#87cefa"/><rect x="507.50" y="309.00" width="3.2" height="3.2" fill="#87cefa"/><rect x="553.00" y="304.60" width="3.2" height="3.2" fill="#87cefa"/><rect x="566.70" y="308.30" width="3.2" height="3.2" fill="#87cefa"/><rect x="583.70" y="336.00" width="3.2" height="3.2" fill="#87cefa"/><rect x="491.60" y="358.60" width="3.2" height="3.2" fill="#87cefa"/><rect x="418.30" y="375.00" width="3.2" height="3.2" fill="#87cefa"/><rect x="530.00" y="387.00" width="3.2" height="3.2" fill="#87cefa"/><rect x="441.90" y="407.00" width="3.2" height="3.2" fill="#87cefa"/><rect x="497.40" y="418.60" width="3.2" height="3.2" fill="#87cefa"/><rect x="492.40" y="424.70" width="3.2" height="3.2" fill="#87cefa"/><rect x="537.60" y="416.00" width="3.2" height="3.2" fill="#87cefa"/><rect x="582.90" y="416.80" width="3.2" height="3.2" fill="#87cefa"/><rect x="566.70" y="433.20" width="3.2" height="3.2" fill="#87cefa"/><rect x="533.40" y="447.50" width="3.2" height="3.2" fill="#87cefa"/><rect x="556.40" y="458.00" width="3.2" height="3.2" fill="#87cefa"/><rect x="571.80" y="460.70" width="3.2" height="3.2" fill="#87cefa"/><rect x="595.80" y="467.00" width="3.2" height="3.2" fill="#87cefa"/><rect x="620.40" y="462.00" width="3.2" height="3.2" fill="#87cefa"/><rect x="686.30" y="471.30" width="3.2" height="3.2" fill="#87cefa"/><rect x="699.80" y="442.70" width="3.2" height="3.2" fill="#87cefa"/><rect x="708.30" y="434.00" width="3.2" height="3.2" fill="#87cefa"/><rect x="735.00" y="486.60" width="3.2" height="3.2" fill="#87cefa"/><rect x="787.90" y="463.00" width="3.2" height="3.2" fill="#87cefa"/><rect x="836.60" y="465.40" width="3.2" height="3.2" fill="#87cefa"/><rect x="267.30" y="351.20" width="3.2" height="3.2" fill="#87cefa"/><rect x="264.50" y="349.00" width="3.2" height="3.2" fill="#87cefa"/><rect x="413.60" y="356.90" width="3.2" height="3.2" fill="#87cefa"/><rect x="418.20" y="374.80" width="3.2" height="3.2" fill="#87cefa"/><rect x="407.20" y="402.70" width="3.2" height="3.2" fill="#87cefa"/><rect x="401.40" y="396.30" width="3.2" height="3.2" fill="#87cefa"/><rect x="396.80" y="386.70" width="3.2" height="3.2" fill="#87cefa"/><rect x="394.50" y="378.70" width="3.2" height="3.2" fill="#87cefa"/><rect x="393.40" y="371.80" width="3.2" height="3.2" fill="#87cefa"/><rect x="294.80" y="425.20" width="3.2" height="3.2" fill="#87cefa"/><rect x="305.10" y="405.00" width="3.2" height="3.2" fill="#87cefa"/><rect x="314.30" y="399.30" width="3.2" height="3.2" fill="#87cefa"/><rect x="313.20" y="394.70" width="3.2" height="3.2" fill="#87cefa"/><rect x="319.00" y="391.30" width="3.2" height="3.2" fill="#87cefa"/><rect x="320.00" y="384.40" width="3.2" height="3.2" fill="#87cefa"/><rect x="313.20" y="384.40" width="3.2" height="3.2" fill="#87cefa"/><rect x="318.90" y="369.50" width="3.2" height="3.2" fill="#87cefa"/><rect x="297.00" y="342.00" width="3.2" height="3.2" fill="#87cefa"/><rect x="298.30" y="348.90" width="3.2" height="3.2" fill="#87cefa"/><rect x="308.60" y="340.80" width="3.2" height="3.2" fill="#87cefa"/><rect x="318.40" y="343.10" width="3.2" height="3.2" fill="#87cefa"/><rect x="323.50" y="336.30" width="3.2" height="3.2" fill="#87cefa"/><rect x="327.00" y="339.70" width="3.2" height="3.2" fill="#87cefa"/><rect x="371.60" y="288.60" width="3.2" height="3.2" fill="#87cefa"/><rect x="376.20" y="293.40" width="3.2" height="3.2" fill="#87cefa"/><rect x="388.80" y="281.70" width="3.2" height="3.2" fill="#87cefa"/><rect x="388.80" y="295.00" width="3.2" height="3.2" fill="#87cefa"/><rect x="360.20" y="379.80" width="3.2" height="3.2" fill="#87cefa"/><rect x="369.30" y="381.00" width="3.2" height="3.2" fill="#87cefa"/><rect x="382.00" y="340.80" width="3.2" height="3.2" fill="#87cefa"/><rect x="390.00" y="340.80" width="3.2" height="3.2" fill="#87cefa"/><rect x="383.10" y="324.80" width="3.2" height="3.2" fill="#87cefa"/><rect x="401.40" y="324.80" width="3.2" height="3.2" fill="#87cefa"/><rect x="401.40" y="331.70" width="3.2" height="3.2" fill="#87cefa"/><rect x="406.00" y="336.30" width="3.2" height="3.2" fill="#87cefa"/><rect x="399.10" y="311.00" width="3.2" height="3.2" fill="#87cefa"/><rect x="407.20" y="310.60" width="3.2" height="3.2" fill="#87cefa"/><rect x="395.00" y="299.00" width="3.2" height="3.2" fill="#87cefa"/><rect x="397.00" y="305.00" width="3.2" height="3.2" fill="#87cefa"/><rect x="403.00" y="313.00" width="3.2" height="3.2" fill="#87cefa"/><rect x="387.00" y="321.00" width="3.2" height="3.2" fill="#87cefa"/><rect x="379.00" y="333.00" width="3.2" height="3.2" fill="#87cefa"/><rect x="374.00" y="347.00" width="3.2" height="3.2" fill="#87cefa"/><rect x="377.00" y="353.00" width="3.2" height="3.2" fill="#87cefa"/><rect x="385.00" y="359.00" width="3.2" height="3.2" fill="#87cefa"/><rect x="367.00" y="367.00" width="3.2" height="3.2" fill="#87cefa"/><rect x="358.00" y="369.00" width="3.2" height="3.2" fill="#87cefa"/><rect x="362.00" y="373.00" width="3.2" height="3.2" fill="#87cefa"/><rect x="393.00" y="349.00" width="3.2" height="3.2" fill="#87cefa"/><rect x="395.00" y="361.00" width="3.2" height="3.2" fill="#87cefa"/><rect x="383.00" y="367.00" width="3.2" height="3.2" fill="#87cefa"/><rect x="347.00" y="287.00" width="3.2" height="3.2" fill="#87cefa"/><rect x="352.00" y="291.00" width="3.2" height="3.2" fill="#87cefa"/><rect x="339.00" y="297.00" width="3.2" height="3.2" fill="#87cefa"/><rect x="334.00" y="309.00" width="3.2" height="3.2" fill="#87cefa"/><rect x="330.00" y="321.00" width="3.2" height="3.2" fill="#87cefa"/><rect x="333.00" y="333.00" width="3.2" height="3.2" fill="#87cefa"/><rect x="337.00" y="351.00" width="3.2" height="3.2" fill="#87cefa"/><rect x="343.00" y="359.00" width="3.2" height="3.2" fill="#87cefa"/><rect x="349.00" y="366.00" width="3.2" height="3.2" fill="#87cefa"/><rect x="391.00" y="291.00" width="3.2" height="3.2" fill="#87cefa"/><rect x="399.00" y="293.00" width="3.2" height="3.2" fill="#87cefa"/><rect x="403.00" y="299.00" width="3.2" height="3.2" fill="#87cefa"/><rect x="357.16" y="302.65" width="3.2" height="3.2" fill="#87cefa"/><rect x="381.91" y="295.10" width="3.2" height="3.2" fill="#87cefa"/><rect x="373.21" y="323.34" width="3.2" height="3.2" fill="#87cefa"/><rect x="337.05" y="336.99" width="3.2" height="3.2" fill="#87cefa"/><rect x="335.50" y="329.88" width="3.2" height="3.2" fill="#87cefa"/><rect x="337.95" y="296.86" width="3.2" height="3.2" fill="#87cefa"/><rect x="364.78" y="367.75" width="3.2" height="3.2" fill="#87cefa"/><rect x="342.03" y="309.62" width="3.2" height="3.2" fill="#87cefa"/><rect x="376.33" y="326.33" width="3.2" height="3.2" fill="#87cefa"/><rect x="397.62" y="316.01" width="3.2" height="3.2" fill="#87cefa"/><rect x="343.58" y="299.47" width="3.2" height="3.2" fill="#87cefa"/><rect x="356.00" y="366.72" width="3.2" height="3.2" fill="#87cefa"/><rect x="346.34" y="344.13" width="3.2" height="3.2" fill="#87cefa"/><rect x="381.00" y="323.99" width="3.2" height="3.2" fill="#87cefa"/><rect x="374.11" y="294.17" width="3.2" height="3.2" fill="#87cefa"/><rect x="337.17" y="307.96" width="3.2" height="3.2" fill="#87cefa"/><rect x="384.14" y="329.30" width="3.2" height="3.2" fill="#87cefa"/><rect x="356.43" y="344.51" width="3.2" height="3.2" fill="#87cefa"/><rect x="366.95" y="316.99" width="3.2" height="3.2" fill="#87cefa"/><rect x="392.77" y="355.44" width="3.2" height="3.2" fill="#87cefa"/><rect x="351.13" y="343.44" width="3.2" height="3.2" fill="#87cefa"/><rect x="372.40" y="372.40" width="3.2" height="3.2" fill="#87cefa"/><rect x="387.85" y="315.85" width="3.2" height="3.2" fill="#87cefa"/><rect x="364.30" y="361.04" width="3.2" height="3.2" fill="#87cefa"/><rect x="344.16" y="335.21" width="3.2" height="3.2" fill="#87cefa"/><rect x="335.63" y="352.47" width="3.2" height="3.2" fill="#87cefa"/><rect x="390.51" y="343.31" width="3.2" height="3.2" fill="#87cefa"/><rect x="398.90" y="318.34" width="3.2" height="3.2" fill="#87cefa"/><rect x="385.27" y="345.36" width="3.2" height="3.2" fill="#87cefa"/><rect x="376.54" y="332.06" width="3.2" height="3.2" fill="#87cefa"/><rect x="368.53" y="352.08" width="3.2" height="3.2" fill="#87cefa"/><rect x="337.25" y="355.68" width="3.2" height="3.2" fill="#87cefa"/><rect x="394.85" y="315.53" width="3.2" height="3.2" fill="#87cefa"/><rect x="361.85" y="352.52" width="3.2" height="3.2" fill="#87cefa"/><rect x="345.38" y="299.40" width="3.2" height="3.2" fill="#87cefa"/><rect x="342.45" y="311.97" width="3.2" height="3.2" fill="#87cefa"/><rect x="362.24" y="372.04" width="3.2" height="3.2" fill="#87cefa"/><rect x="338.76" y="331.38" width="3.2" height="3.2" fill="#87cefa"/><rect x="374.23" y="373.19" width="3.2" height="3.2" fill="#87cefa"/><rect x="353.73" y="328.12" width="3.2" height="3.2" fill="#87cefa"/><rect x="359.81" y="373.27" width="3.2" height="3.2" fill="#87cefa"/><rect x="346.00" y="310.46" width="3.2" height="3.2" fill="#87cefa"/><rect x="350.32" y="334.83" width="3.2" height="3.2" fill="#87cefa"/><rect x="377.24" y="313.43" width="3.2" height="3.2" fill="#87cefa"/><rect x="360.60" y="342.66" width="3.2" height="3.2" fill="#87cefa"/><rect x="371.67" y="347.60" width="3.2" height="3.2" fill="#87cefa"/><rect x="383.82" y="293.33" width="3.2" height="3.2" fill="#87cefa"/><rect x="362.35" y="326.55" width="3.2" height="3.2" fill="#87cefa"/><rect x="340.50" y="349.21" width="3.2" height="3.2" fill="#87cefa"/><rect x="337.37" y="294.61" width="3.2" height="3.2" fill="#87cefa"/><rect x="348.46" y="303.76" width="3.2" height="3.2" fill="#87cefa"/><rect x="358.39" y="293.19" width="3.2" height="3.2" fill="#87cefa"/><rect x="340.34" y="323.14" width="3.2" height="3.2" fill="#87cefa"/><rect x="379.12" y="302.43" width="3.2" height="3.2" fill="#87cefa"/><rect x="351.75" y="321.58" width="3.2" height="3.2" fill="#87cefa"/><rect x="360.22" y="299.96" width="3.2" height="3.2" fill="#87cefa"/><rect x="367.92" y="334.72" width="3.2" height="3.2" fill="#87cefa"/><rect x="339.16" y="297.97" width="3.2" height="3.2" fill="#87cefa"/><rect x="358.59" y="313.62" width="3.2" height="3.2" fill="#87cefa"/><rect x="395.37" y="303.67" width="3.2" height="3.2" fill="#87cefa"/><rect x="372.63" y="302.24" width="3.2" height="3.2" fill="#87cefa"/><rect x="373.76" y="290.73" width="3.2" height="3.2" fill="#87cefa"/><rect x="352.42" y="323.44" width="3.2" height="3.2" fill="#87cefa"/><rect x="345.30" y="362.46" width="3.2" height="3.2" fill="#87cefa"/><rect x="372.96" y="363.15" width="3.2" height="3.2" fill="#87cefa"/><rect x="357.61" y="309.60" width="3.2" height="3.2" fill="#87cefa"/><rect x="394.58" y="359.37" width="3.2" height="3.2" fill="#87cefa"/><rect x="349.82" y="337.97" width="3.2" height="3.2" fill="#87cefa"/><rect x="359.56" y="290.92" width="3.2" height="3.2" fill="#87cefa"/><rect x="352.27" y="354.81" width="3.2" height="3.2" fill="#87cefa"/><rect x="349.34" y="309.97" width="3.2" height="3.2" fill="#87cefa"/><rect x="347.55" y="307.81" width="3.2" height="3.2" fill="#87cefa"/><rect x="396.25" y="334.30" width="3.2" height="3.2" fill="#87cefa"/><rect x="339.08" y="351.74" width="3.2" height="3.2" fill="#87cefa"/><rect x="389.42" y="334.16" width="3.2" height="3.2" fill="#87cefa"/><rect x="346.17" y="364.12" width="3.2" height="3.2" fill="#87cefa"/><rect x="357.82" y="365.24" width="3.2" height="3.2" fill="#87cefa"/><rect x="363.03" y="379.30" width="3.2" height="3.2" fill="#87cefa"/><rect x="387.50" y="304.50" width="3.2" height="3.2" fill="#87cefa"/><rect x="342.27" y="302.68" width="3.2" height="3.2" fill="#87cefa"/><rect x="359.17" y="340.96" width="3.2" height="3.2" fill="#87cefa"/><rect x="342.57" y="289.50" width="3.2" height="3.2" fill="#87cefa"/><rect x="372.50" y="378.03" width="3.2" height="3.2" fill="#87cefa"/><rect x="365.48" y="372.07" width="3.2" height="3.2" fill="#87cefa"/><rect x="395.17" y="308.45" width="3.2" height="3.2" fill="#87cefa"/><rect x="351.72" y="316.34" width="3.2" height="3.2" fill="#87cefa"/><rect x="350.86" y="344.60" width="3.2" height="3.2" fill="#87cefa"/><rect x="352.29" y="328.48" width="3.2" height="3.2" fill="#87cefa"/><rect x="359.43" y="332.25" width="3.2" height="3.2" fill="#87cefa"/><rect x="364.49" y="376.50" width="3.2" height="3.2" fill="#87cefa"/><rect x="370.62" y="339.34" width="3.2" height="3.2" fill="#87cefa"/><rect x="372.27" y="289.93" width="3.2" height="3.2" fill="#87cefa"/><rect x="365.96" y="305.76" width="3.2" height="3.2" fill="#87cefa"/><rect x="345.70" y="333.72" width="3.2" height="3.2" fill="#87cefa"/><rect x="387.53" y="341.71" width="3.2" height="3.2" fill="#87cefa"/><rect x="357.33" y="338.04" width="3.2" height="3.2" fill="#87cefa"/><rect x="374.69" y="363.65" width="3.2" height="3.2" fill="#87cefa"/><rect x="340.69" y="342.08" width="3.2" height="3.2" fill="#87cefa"/><rect x="351.46" y="314.79" width="3.2" height="3.2" fill="#87cefa"/><rect x="391.09" y="337.02" width="3.2" height="3.2" fill="#87cefa"/><rect x="375.16" y="361.31" width="3.2" height="3.2" fill="#87cefa"/><rect x="379.01" y="336.81" width="3.2" height="3.2" fill="#87cefa"/><rect x="371.41" y="354.83" width="3.2" height="3.2" fill="#87cefa"/><path d="M337.6 310.3 L341.0 303.4 L350.2 299.9 L366.3 298.3 L372.0 293.8 L380.0 295.4 L388.0 298.8 L394.2 303.4 L396.1 310.3 L394.9 317.1 L386.9 320.6 L381.2 324.0 L375.4 330.9 L370.8 337.8 L365.1 343.5 L361.7 351.5 L362.8 360.7 L368.6 363.0 L366.3 371.0 L359.4 377.2 L351.4 374.5 L346.8 366.4 L342.2 360.7 L339.2 353.8 L343.8 345.8 L345.6 337.8 L339.9 329.7 L336.5 321.7 Z" fill="#87cefa"/><rect x="348.32" y="499.34" width="170.09" height="41.66" fill="none" stroke="#262626" stroke-width="1.3"/><rect x="338.07" y="450.21" width="122.22" height="49.12" fill="none" stroke="#262626" stroke-width="1.3"/><rect x="347.47" y="362.77" width="54.70" height="87.44" fill="none" stroke="#262626" stroke-width="1.3"/><rect x="290.20" y="362.77" width="57.26" height="87.44" fill="none" stroke="#262626" stroke-width="1.3"/><rect x="331.23" y="274.93" width="62.39" height="87.84" fill="none" stroke="#262626" stroke-width="1.3"/><rect x="283.37" y="274.93" width="47.86" height="87.84" fill="none" stroke="#262626" stroke-width="1.3"/><rect x="344.91" y="216.97" width="52.14" height="57.97" fill="none" stroke="#262626" stroke-width="1.3"/><rect x="291.06" y="216.97" width="53.85" height="57.97" fill="none" stroke="#262626" stroke-width="1.3"/><rect x="312.43" y="70.18" width="105.98" height="146.79" fill="none" stroke="#262626" stroke-width="1.3"/><rect x="132.94" y="260.79" width="117.09" height="181.96" fill="none" stroke="#262626" stroke-width="1.3"/><text x="357.82" y="503.54" font-size="13.5" text-anchor="start" fill="#1a1a1a" stroke="#1a1a1a" stroke-width="0.2" font-family="Liberation Sans">ROI 0</text><text x="347.57" y="454.41" font-size="13.5" text-anchor="start" fill="#1a1a1a" stroke="#1a1a1a" stroke-width="0.2" font-family="Liberation Sans">ROI 1</text><text x="356.97" y="366.97" font-size="13.5" text-anchor="start" fill="#1a1a1a" stroke="#1a1a1a" stroke-width="0.2" font-family="Liberation Sans">ROI 2</text><text x="299.70" y="366.97" font-size="13.5" text-anchor="start" fill="#1a1a1a" stroke="#1a1a1a" stroke-width="0.2" font-family="Liberation Sans">ROI 3</text><text x="340.73" y="279.13" font-size="13.5" text-anchor="start" fill="#1a1a1a" stroke="#1a1a1a" stroke-width="0.2" font-family="Liberation Sans">ROI 4</text><text x="292.87" y="279.13" font-size="13.5" text-anchor="start" fill="#1a1a1a" stroke="#1a1a1a" stroke-width="0.2" font-family="Liberation Sans">ROI 5</text><text x="354.41" y="221.17" font-size="13.5" text-anchor="start" fill="#1a1a1a" stroke="#1a1a1a" stroke-width="0.2" font-family="Liberation Sans">ROI 6</text><text x="300.56" y="221.17" font-size="13.5" text-anchor="start" fill="#1a1a1a" stroke="#1a1a1a" stroke-width="0.2" font-family="Liberation Sans">ROI 7</text><text x="321.93" y="74.38" font-size="13.5" text-anchor="start" fill="#1a1a1a" stroke="#1a1a1a" stroke-width="0.2" font-family="Liberation Sans">ROI 8</text><text x="142.44" y="264.99" font-size="13.5" text-anchor="start" fill="#1a1a1a" stroke="#1a1a1a" stroke-width="0.2" font-family="Liberation Sans">ROI G</text><rect x="348.2" y="341.8" width="8" height="8" fill="#ff0000"/><line x1="62.90" y1="13.00" x2="62.90" y2="608.50" stroke="#222" stroke-width="1.5" /><line x1="53.50" y1="602.60" x2="839.50" y2="602.60" stroke="#222" stroke-width="1.5" /><line x1="53.50" y1="602.50" x2="62.90" y2="602.50" stroke="#333" stroke-width="1.3" /><text x="50.50" y="607.80" font-size="14.5" text-anchor="end" fill="#1a1a1a" stroke="#1a1a1a" stroke-width="0.2" font-family="Liberation Sans">0</text><line x1="53.50" y1="504.25" x2="62.90" y2="504.25" stroke="#333" stroke-width="1.3" /><text x="50.50" y="509.55" font-size="14.5" text-anchor="end" fill="#1a1a1a" stroke="#1a1a1a" stroke-width="0.2" font-family="Liberation Sans">500</text><line x1="53.50" y1="406.00" x2="62.90" y2="406.00" stroke="#333" stroke-width="1.3" /><text x="50.50" y="411.30" font-size="14.5" text-anchor="end" fill="#1a1a1a" stroke="#1a1a1a" stroke-width="0.2" font-family="Liberation Sans">1000</text><line x1="53.50" y1="307.75" x2="62.90" y2="307.75" stroke="#333" stroke-width="1.3" /><text x="50.50" y="313.05" font-size="14.5" text-anchor="end" fill="#1a1a1a" stroke="#1a1a1a" stroke-width="0.2" font-family="Liberation Sans">1500</text><line x1="53.50" y1="209.50" x2="62.90" y2="209.50" stroke="#333" stroke-width="1.3" /><text x="50.50" y="214.80" font-size="14.5" text-anchor="end" fill="#1a1a1a" stroke="#1a1a1a" stroke-width="0.2" font-family="Liberation Sans">2000</text><line x1="53.50" y1="111.25" x2="62.90" y2="111.25" stroke="#333" stroke-width="1.3" /><text x="50.50" y="116.55" font-size="14.5" text-anchor="end" fill="#1a1a1a" stroke="#1a1a1a" stroke-width="0.2" font-family="Liberation Sans">2500</text><line x1="53.50" y1="13.00" x2="62.90" y2="13.00" stroke="#333" stroke-width="1.3" /><text x="50.50" y="18.30" font-size="14.5" text-anchor="end" fill="#1a1a1a" stroke="#1a1a1a" stroke-width="0.2" font-family="Liberation Sans">3000</text><line x1="62.80" y1="602.50" x2="62.80" y2="609.00" stroke="#333" stroke-width="1.3" /><text x="63.30" y="628.00" font-size="14.3" text-anchor="middle" fill="#1a1a1a" stroke="#1a1a1a" stroke-width="0.2" font-family="Liberation Sans">-1</text><line x1="233.74" y1="602.50" x2="233.74" y2="609.00" stroke="#333" stroke-width="1.3" /><text x="234.24" y="628.00" font-size="14.3" text-anchor="middle" fill="#1a1a1a" stroke="#1a1a1a" stroke-width="0.2" font-family="Liberation Sans">199</text><line x1="404.68" y1="602.50" x2="404.68" y2="609.00" stroke="#333" stroke-width="1.3" /><text x="405.18" y="628.00" font-size="14.3" text-anchor="middle" fill="#1a1a1a" stroke="#1a1a1a" stroke-width="0.2" font-family="Liberation Sans">399</text><line x1="575.62" y1="602.50" x2="575.62" y2="609.00" stroke="#333" stroke-width="1.3" /><text x="576.12" y="628.00" font-size="14.3" text-anchor="middle" fill="#1a1a1a" stroke="#1a1a1a" stroke-width="0.2" font-family="Liberation Sans">599</text><line x1="746.56" y1="602.50" x2="746.56" y2="609.00" stroke="#333" stroke-width="1.3" /><text x="747.06" y="628.00" font-size="14.3" text-anchor="middle" fill="#1a1a1a" stroke="#1a1a1a" stroke-width="0.2" font-family="Liberation Sans">799</text></svg>
</div></body></html>
